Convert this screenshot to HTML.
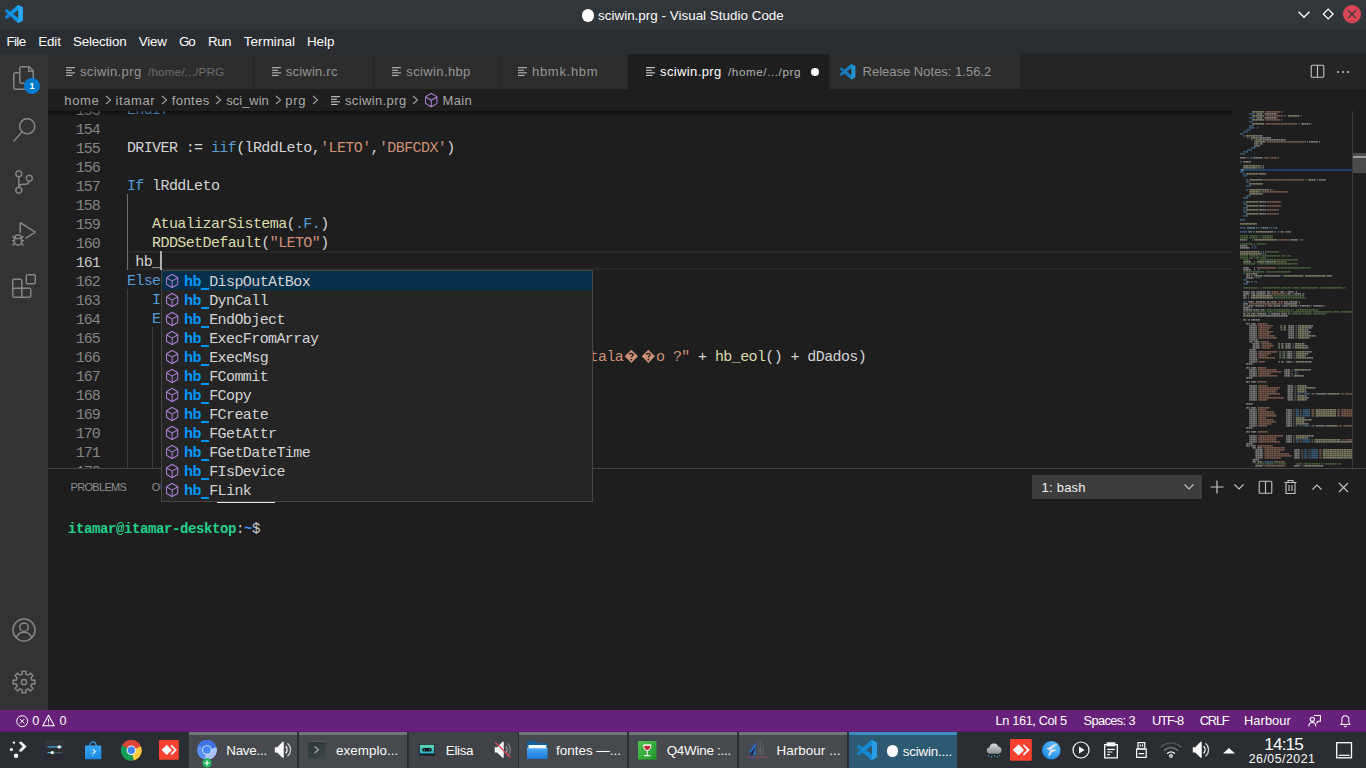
<!DOCTYPE html>
<html><head><meta charset="utf-8"><title>sciwin.prg - Visual Studio Code</title>
<style>
html,body{margin:0;padding:0;background:#1e1e1e;overflow:hidden;}
body{width:1366px;height:768px;position:relative;font-family:"Liberation Sans",sans-serif;}
#root{position:absolute;left:0;top:0;width:1366px;height:768px;overflow:hidden;background:#1e1e1e;}
.m{font-family:"Liberation Mono",monospace;}
svg{position:absolute;overflow:visible;}
</style></head><body><div id="root">
<div style="position:absolute;left:0px;top:0px;width:1366px;height:29px;background:#31363b;"></div>
<div style="position:absolute;left:0px;top:29px;width:1366px;height:25px;background:#2a2e32;"></div>
<div style="position:absolute;left:0px;top:54px;width:48px;height:656px;background:#333333;"></div>
<div style="position:absolute;left:48px;top:54px;width:1318px;height:35px;background:#252526;"></div>
<div style="position:absolute;left:48px;top:89px;width:1318px;height:22px;background:#1e1e1e;"></div>
<div style="position:absolute;left:48px;top:111px;width:1318px;height:357px;background:#1e1e1e;"></div>
<div style="position:absolute;left:48px;top:468px;width:1318px;height:242px;background:#1e1e1e;"></div>
<div style="position:absolute;left:0px;top:710px;width:1366px;height:22px;background:#68217a;"></div>
<div style="position:absolute;left:0px;top:731px;width:1366px;height:1px;background:#5c1d6c;"></div>
<div style="position:absolute;left:0px;top:732px;width:1366px;height:36px;background:#2a2e32;"></div>
<svg style="left:5.050000000000001px;top:4.950000000000001px;opacity:1" width="17.9" height="17.9" viewBox="0 0 24 24"><path d="M23.15 2.587L18.21.21a1.494 1.494 0 0 0-1.705.29l-9.46 8.63-4.12-3.128a.999.999 0 0 0-1.276.057L.327 7.261A1 1 0 0 0 .326 8.74L3.899 12 .326 15.26a1 1 0 0 0 .001 1.479L1.65 17.94a.999.999 0 0 0 1.276.057l4.12-3.128 9.46 8.63a1.492 1.492 0 0 0 1.704.29l4.942-2.377A1.5 1.5 0 0 0 24 20.06V3.939a1.5 1.5 0 0 0-.85-1.352zm-5.146 14.861L10.826 12l7.178-5.448v10.896z" fill="#1391e2"/><path d="M16.5 .5 L18.2 .2 L23.15 2.6 A1.5 1.5 0 0 1 24 3.94 V20.06 A1.5 1.5 0 0 1 23.15 21.4 L18.2 23.8 L16.5 23.5 L18 22 V2 Z" fill="#29a9f6"/><path d="M.33 7.26 L1.65 6.06 a1 1 0 0 1 1.28-.06 L7.05 9.13 L3.9 12 L.33 8.74 a1 1 0 0 1 0-1.48z M.33 15.26 L3.9 12 l3.15 2.87 L2.93 18 a1 1 0 0 1 -1.28-.06 L.33 16.74 a1 1 0 0 1 0-1.48z" fill="#0e84d2"/></svg>
<div style="position:absolute;left:582px;top:9.2px;width:12.4px;height:12.4px;border-radius:50%;background:#fcfcfc"></div>
<span style="position:absolute;left:598.00px;top:5.86px;line-height:19px;font-size:13.4px;color:#fcfcfc;white-space:pre;letter-spacing:0.023px;">sciwin.prg - Visual Studio Code</span>
<svg style="left:1296px;top:8px;" width="16" height="12" viewBox="0 0 16 12"><path d="M2.600 3.700 L8 9.200 L13.400 3.700" fill="none" stroke="#fcfcfc" stroke-width="1.300"/></svg>
<svg style="left:1320px;top:6px;" width="16" height="16" viewBox="0 0 16 16"><path d="M8.200 3.100 L13.100 8 L8.200 12.900 L3.300 8 Z" fill="none" stroke="#fcfcfc" stroke-width="1.300"/></svg>
<svg style="left:1342px;top:4px;" width="20" height="20" viewBox="0 0 20 20"><circle cx="10" cy="10.1" r="9.1" fill="#da4453"/><path d="M6 6.1 L14 14.1 M14 6.1 L6 14.1" stroke="#31363b" stroke-width="1.3" fill="none"/></svg>
<span style="position:absolute;left:6.50px;top:31.86px;line-height:19px;font-size:13.4px;color:#fcfcfc;white-space:pre;letter-spacing:-0.651px;">File</span>
<span style="position:absolute;left:38.30px;top:31.86px;line-height:19px;font-size:13.4px;color:#fcfcfc;white-space:pre;letter-spacing:-0.165px;">Edit</span>
<span style="position:absolute;left:73.00px;top:31.86px;line-height:19px;font-size:13.4px;color:#fcfcfc;white-space:pre;letter-spacing:-0.188px;">Selection</span>
<span style="position:absolute;left:138.80px;top:31.86px;line-height:19px;font-size:13.4px;color:#fcfcfc;white-space:pre;letter-spacing:-0.228px;">View</span>
<span style="position:absolute;left:179.00px;top:31.86px;line-height:19px;font-size:13.4px;color:#fcfcfc;white-space:pre;letter-spacing:-1.050px;">Go</span>
<span style="position:absolute;left:208.00px;top:31.86px;line-height:19px;font-size:13.4px;color:#fcfcfc;white-space:pre;letter-spacing:-0.511px;">Run</span>
<span style="position:absolute;left:243.80px;top:31.86px;line-height:19px;font-size:13.4px;color:#fcfcfc;white-space:pre;letter-spacing:0.079px;">Terminal</span>
<span style="position:absolute;left:307.00px;top:31.86px;line-height:19px;font-size:13.4px;color:#fcfcfc;white-space:pre;letter-spacing:-0.071px;">Help</span>
<svg style="left:12.0px;top:66.0px;" width="24" height="24" viewBox="0 0 24 24"><path d="M17.5 0h-9L7 1.5V6H2.5L1 7.5v15.07L2.5 24h12.07L16 22.57V18h4.7l1.3-1.43V4.5L17.5 0zm0 2.12l2.38 2.38H17.5V2.12zm-3 20.38h-12v-15H7v9.07L8.5 18h6v4.5zm6-6h-12v-15H16V6h4.5v10.5z" fill="#858585"/></svg>
<svg style="left:12.0px;top:118.0px;" width="24" height="24" viewBox="0 0 24 24"><path d="M15.25 0a8.25 8.25 0 0 0-6.18 13.72L1 22.88l1.12 1 8.05-9.12A8.251 8.251 0 1 0 15.25.01V0zm0 15a6.75 6.75 0 1 1 0-13.5 6.75 6.75 0 0 1 0 13.5z" fill="#858585"/></svg>
<svg style="left:12.0px;top:170.0px;" width="24" height="24" viewBox="0 0 24 24"><path d="M21.007 8.222A3.738 3.738 0 0 0 15.045 5.2a3.737 3.737 0 0 0 1.156 6.583 2.988 2.988 0 0 1-2.668 1.67h-2.99a4.456 4.456 0 0 0-2.989 1.165V7.4a3.737 3.737 0 1 0-1.494 0v9.117a3.776 3.776 0 1 0 1.816.099 2.99 2.99 0 0 1 2.668-1.667h2.99a4.484 4.484 0 0 0 4.223-3.039 3.736 3.736 0 0 0 3.25-3.687zM4.565 3.738a2.242 2.242 0 1 1 4.484 0 2.242 2.242 0 0 1-4.484 0zm4.484 16.441a2.242 2.242 0 1 1-4.484 0 2.242 2.242 0 0 1 4.484 0zm8.221-9.715a2.242 2.242 0 1 1 0-4.485 2.242 2.242 0 0 1 0 4.485z" fill="#858585"/></svg>
<svg style="left:12.0px;top:222.0px;" width="24" height="24" viewBox="0 0 24 24"><path d="M10.94 13.5l-1.32 1.32a3.73 3.73 0 0 0-7.24 0L1.06 13.5 0 14.56l1.72 1.72-.22.22V18H0v1.5h1.5v.08c.077.489.214.966.41 1.42L0 22.94 1.06 24l1.65-1.65A4.308 4.308 0 0 0 6 24a4.31 4.31 0 0 0 3.29-1.65L10.94 24 12 22.94 10.09 21c.198-.464.336-.951.41-1.45v-.1H12V18h-1.5v-1.5l-.22-.22L12 14.56l-1.06-1.06zM6 13.5a2.25 2.25 0 0 1 2.25 2.25h-4.5A2.25 2.25 0 0 1 6 13.5zm3 6a3.33 3.33 0 0 1-3 3 3.33 3.33 0 0 1-3-3v-2.25h6v2.25zm14.76-9.9v1.26L13.5 17.37V15.6l8.5-5.37L9 2v9.46a5.07 5.07 0 0 0-1.5-.72V.63L8.64 0l15.12 9.6z" fill="#858585"/></svg>
<svg style="left:12.0px;top:274.0px;" width="24" height="24" viewBox="0 0 24 24"><path d="M13.5 1.5L15 0h7.5L24 1.5V9l-1.5 1.5H15L13.5 9V1.5zm1.5 0V9h7.5V1.5H15zM0 15V6l1.5-1.5H9L10.5 6v7.5H18l1.5 1.5v7.5L18 24H1.5L0 22.5V15zm9-1.5V6H1.500v7.500H9zM9 15H1.500v7.500H9V15zm1.500 7.500H18V15h-7.500v7.500z" fill="#858585"/></svg>
<div style="position:absolute;left:24px;top:78px;width:16px;height:16px;border-radius:50%;background:#007acc;color:#fff;font-size:9px;font-weight:700;line-height:16px;text-align:center;">1</div>
<svg style="left:12px;top:618px;" width="24" height="24" viewBox="0 0 24 24"><g fill="none" stroke="#858585" stroke-width="1.5"><circle cx="12" cy="12" r="11"/><circle cx="12" cy="9.3" r="4.2"/><path d="M4.6 19.8 C5.6 15.8 8.4 14.2 12 14.2 C15.6 14.2 18.4 15.800 19.400 19.800"/></g></svg>
<svg style="left:12px;top:670px;" width="24" height="24" viewBox="0 0 24 24"><g fill="none" stroke="#858585" stroke-width="1.5" stroke-linejoin="round"><path d="M10.11 1.16 L13.89 1.16 L13.87 4.22 L16.18 5.18 L18.33 3.00 L21.00 5.67 L18.82 7.82 L19.78 10.13 L22.84 10.11 L22.84 13.89 L19.78 13.87 L18.82 16.18 L21.00 18.33 L18.33 21.00 L16.18 18.82 L13.87 19.78 L13.89 22.84 L10.11 22.84 L10.13 19.78 L7.82 18.82 L5.67 21.00 L3.00 18.33 L5.18 16.18 L4.22 13.87 L1.16 13.89 L1.16 10.11 L4.22 10.13 L5.18 7.82 L3.00 5.67 L5.67 3.00 L7.82 5.18 L10.13 4.22Z"/><circle cx="12" cy="12" r="2.6"/></g></svg>
<div style="position:absolute;left:48px;top:54px;width:206px;height:35px;background:#2d2d2d;"></div>
<div style="position:absolute;left:253px;top:54px;width:1px;height:35px;background:#252526;"></div>
<div style="position:absolute;left:254px;top:54px;width:120px;height:35px;background:#2d2d2d;"></div>
<div style="position:absolute;left:373px;top:54px;width:1px;height:35px;background:#252526;"></div>
<div style="position:absolute;left:374px;top:54px;width:126px;height:35px;background:#2d2d2d;"></div>
<div style="position:absolute;left:499px;top:54px;width:1px;height:35px;background:#252526;"></div>
<div style="position:absolute;left:500px;top:54px;width:128px;height:35px;background:#2d2d2d;"></div>
<div style="position:absolute;left:627px;top:54px;width:1px;height:35px;background:#252526;"></div>
<div style="position:absolute;left:628px;top:54px;width:202px;height:35px;background:#1e1e1e;"></div>
<div style="position:absolute;left:829px;top:54px;width:1px;height:35px;background:#252526;"></div>
<div style="position:absolute;left:830px;top:54px;width:191px;height:35px;background:#2d2d2d;"></div>
<div style="position:absolute;left:1020px;top:54px;width:1px;height:35px;background:#252526;"></div>
<svg style="left:65.5px;top:66.5px;" width="9" height="9.2" viewBox="0 0 9 9.2"><g fill="#b8b8b8"><rect x="0" y="0.100" width="9" height="1.100"/><rect x="0" y="2.700" width="6" height="1.100"/><rect x="0" y="5.300" width="9" height="1.100"/><rect x="0" y="7.900" width="6.500" height="1.100"/></g></svg>
<span style="position:absolute;left:80.00px;top:62.60px;line-height:18px;font-size:13px;color:#969696;white-space:pre;letter-spacing:0.369px;">sciwin.prg</span>
<span style="position:absolute;left:148.00px;top:64.05px;line-height:16px;font-size:11.7px;color:#6e6e6e;white-space:pre;letter-spacing:0.180px;">/home/.../PRG</span>
<svg style="left:271.5px;top:66.5px;" width="9" height="9.2" viewBox="0 0 9 9.2"><g fill="#b8b8b8"><rect x="0" y="0.100" width="9" height="1.100"/><rect x="0" y="2.700" width="6" height="1.100"/><rect x="0" y="5.300" width="9" height="1.100"/><rect x="0" y="7.900" width="6.500" height="1.100"/></g></svg>
<span style="position:absolute;left:285.80px;top:62.60px;line-height:18px;font-size:13px;color:#969696;white-space:pre;letter-spacing:0.218px;">sciwin.rc</span>
<svg style="left:391.5px;top:66.5px;" width="9" height="9.2" viewBox="0 0 9 9.2"><g fill="#b8b8b8"><rect x="0" y="0.100" width="9" height="1.100"/><rect x="0" y="2.700" width="6" height="1.100"/><rect x="0" y="5.300" width="9" height="1.100"/><rect x="0" y="7.900" width="6.500" height="1.100"/></g></svg>
<span style="position:absolute;left:406.30px;top:62.60px;line-height:18px;font-size:13px;color:#969696;white-space:pre;letter-spacing:0.368px;">sciwin.hbp</span>
<svg style="left:517.5px;top:66.5px;" width="9" height="9.2" viewBox="0 0 9 9.2"><g fill="#b8b8b8"><rect x="0" y="0.100" width="9" height="1.100"/><rect x="0" y="2.700" width="6" height="1.100"/><rect x="0" y="5.300" width="9" height="1.100"/><rect x="0" y="7.900" width="6.500" height="1.100"/></g></svg>
<span style="position:absolute;left:532.00px;top:62.60px;line-height:18px;font-size:13px;color:#969696;white-space:pre;letter-spacing:0.706px;">hbmk.hbm</span>
<svg style="left:645.5px;top:66.5px;" width="9" height="9.2" viewBox="0 0 9 9.2"><g fill="#d0d0d0"><rect x="0" y="0.100" width="9" height="1.100"/><rect x="0" y="2.700" width="6" height="1.100"/><rect x="0" y="5.300" width="9" height="1.100"/><rect x="0" y="7.900" width="6.500" height="1.100"/></g></svg>
<span style="position:absolute;left:660.00px;top:62.60px;line-height:18px;font-size:13px;color:#ffffff;white-space:pre;letter-spacing:0.379px;">sciwin.prg</span>
<span style="position:absolute;left:728.00px;top:64.05px;line-height:16px;font-size:11.7px;color:#b4b4b4;white-space:pre;letter-spacing:0.566px;">/home/.../prg</span>
<div style="position:absolute;left:811px;top:68px;width:8px;height:8px;border-radius:50%;background:#ffffff"></div>
<svg style="left:840.35px;top:64.05px;opacity:0.8" width="15.3" height="15.3" viewBox="0 0 24 24"><path d="M23.15 2.587L18.21.21a1.494 1.494 0 0 0-1.705.29l-9.46 8.63-4.12-3.128a.999.999 0 0 0-1.276.057L.327 7.261A1 1 0 0 0 .326 8.74L3.899 12 .326 15.26a1 1 0 0 0 .001 1.479L1.65 17.94a.999.999 0 0 0 1.276.057l4.12-3.128 9.46 8.63a1.492 1.492 0 0 0 1.704.29l4.942-2.377A1.5 1.5 0 0 0 24 20.06V3.939a1.5 1.5 0 0 0-.85-1.352zm-5.146 14.861L10.826 12l7.178-5.448v10.896z" fill="#1391e2"/><path d="M16.5 .5 L18.2 .2 L23.15 2.6 A1.5 1.5 0 0 1 24 3.94 V20.06 A1.5 1.5 0 0 1 23.15 21.4 L18.2 23.8 L16.5 23.5 L18 22 V2 Z" fill="#29a9f6"/><path d="M.33 7.26 L1.65 6.06 a1 1 0 0 1 1.28-.06 L7.05 9.13 L3.9 12 L.33 8.74 a1 1 0 0 1 0-1.48z M.33 15.26 L3.9 12 l3.15 2.87 L2.93 18 a1 1 0 0 1 -1.28-.06 L.33 16.74 a1 1 0 0 1 0-1.48z" fill="#0e84d2"/></svg>
<span style="position:absolute;left:862.50px;top:62.60px;line-height:18px;font-size:13px;color:#969696;white-space:pre;letter-spacing:0.008px;">Release Notes: 1.56.2</span>
<svg style="left:1310px;top:64px;" width="15" height="15" viewBox="0 0 15 15"><g fill="none" stroke="#c5c5c5" stroke-width="1.1"><rect x="1.2" y="1.3" width="12.6" height="12" rx="1"/><path d="M7.5 1.300V13.300"/></g></svg>
<div style="position:absolute;left:1337.1px;top:70.9px;width:1.9px;height:1.9px;border-radius:50%;background:#c5c5c5"></div>
<div style="position:absolute;left:1342.1px;top:70.9px;width:1.9px;height:1.9px;border-radius:50%;background:#c5c5c5"></div>
<div style="position:absolute;left:1347.1px;top:70.9px;width:1.9px;height:1.9px;border-radius:50%;background:#c5c5c5"></div>
<span style="position:absolute;left:64.30px;top:91.50px;line-height:18px;font-size:13px;color:#a9a9a9;white-space:pre;letter-spacing:0.620px;">home</span>
<svg style="left:104.7px;top:95px;" width="7" height="10" viewBox="0 0 7 10"><path d="M1 1 L5.6 5 L1 9" fill="none" stroke="#a0a0a0" stroke-width="1.1"/></svg>
<span style="position:absolute;left:115.50px;top:91.50px;line-height:18px;font-size:13px;color:#a9a9a9;white-space:pre;letter-spacing:0.614px;">itamar</span>
<svg style="left:160.7px;top:95px;" width="7" height="10" viewBox="0 0 7 10"><path d="M1 1 L5.6 5 L1 9" fill="none" stroke="#a0a0a0" stroke-width="1.1"/></svg>
<span style="position:absolute;left:171.80px;top:91.50px;line-height:18px;font-size:13px;color:#a9a9a9;white-space:pre;letter-spacing:0.414px;">fontes</span>
<svg style="left:215.2px;top:95px;" width="7" height="10" viewBox="0 0 7 10"><path d="M1 1 L5.6 5 L1 9" fill="none" stroke="#a0a0a0" stroke-width="1.1"/></svg>
<span style="position:absolute;left:226.30px;top:91.50px;line-height:18px;font-size:13px;color:#a9a9a9;white-space:pre;letter-spacing:-0.019px;">sci_win</span>
<svg style="left:274.7px;top:95px;" width="7" height="10" viewBox="0 0 7 10"><path d="M1 1 L5.6 5 L1 9" fill="none" stroke="#a0a0a0" stroke-width="1.1"/></svg>
<span style="position:absolute;left:285.30px;top:91.50px;line-height:18px;font-size:13px;color:#a9a9a9;white-space:pre;letter-spacing:0.681px;">prg</span>
<svg style="left:311.7px;top:95px;" width="7" height="10" viewBox="0 0 7 10"><path d="M1 1 L5.6 5 L1 9" fill="none" stroke="#a0a0a0" stroke-width="1.1"/></svg>
<svg style="left:330.5px;top:95.5px;" width="9" height="9.2" viewBox="0 0 9 9.2"><g fill="#c5c5c5"><rect x="0" y="0.100" width="9" height="1.100"/><rect x="0" y="2.700" width="6" height="1.100"/><rect x="0" y="5.300" width="9" height="1.100"/><rect x="0" y="7.900" width="6.500" height="1.100"/></g></svg>
<span style="position:absolute;left:345.00px;top:91.50px;line-height:18px;font-size:13px;color:#a9a9a9;white-space:pre;letter-spacing:0.369px;">sciwin.prg</span>
<svg style="left:412.2px;top:95px;" width="7" height="10" viewBox="0 0 7 10"><path d="M1 1 L5.6 5 L1 9" fill="none" stroke="#a0a0a0" stroke-width="1.1"/></svg>
<svg style="left:422.75px;top:92.35px;" width="16.5" height="16.5" viewBox="0 0 16 16"><path d="M13.51 4l-5-3h-1l-5 3-.49.86v6l.49.85 5 3h1l5-3 .49-.85v-6L13.51 4zm-6 9.56l-4.5-2.7V5.7l4.5 2.45v5.41zM3.27 4.7l4.74-2.84 4.74 2.84-4.74 2.590L3.270 4.700zm9.740 6.160l-4.500 2.700V8.150l4.500-2.450v5.160z" fill="#b180d7"/></svg>
<span style="position:absolute;left:442.50px;top:91.50px;line-height:18px;font-size:13px;color:#a9a9a9;white-space:pre;letter-spacing:0.318px;">Main</span>
<div style="position:absolute;left:48px;top:111px;width:1318px;height:357px;overflow:hidden;">
<div style="position:absolute;left:79px;top:140px;width:1105px;height:19px;box-sizing:border-box;border:2px solid #282828;border-right:none;"></div>
<div style="position:absolute;left:79px;top:83px;width:1px;height:76px;background:#707070;"></div>
<div style="position:absolute;left:79px;top:178px;width:1px;height:38px;background:#404040;"></div>
<div style="position:absolute;left:79px;top:216px;width:1px;height:152px;background:#404040;"></div>
<div style="position:absolute;left:104px;top:216px;width:1px;height:152px;background:#404040;"></div>
<div class="m" style="position:absolute;left:9.85px;top:-9.30px;width:42px;text-align:right;height:19px;line-height:19px;font-size:15px;letter-spacing:-0.950px;color:#858585">153</div>
<div class="m" style="position:absolute;left:9.85px;top:9.70px;width:42px;text-align:right;height:19px;line-height:19px;font-size:15px;letter-spacing:-0.950px;color:#858585">154</div>
<div class="m" style="position:absolute;left:9.85px;top:28.70px;width:42px;text-align:right;height:19px;line-height:19px;font-size:15px;letter-spacing:-0.950px;color:#858585">155</div>
<div class="m" style="position:absolute;left:9.85px;top:47.70px;width:42px;text-align:right;height:19px;line-height:19px;font-size:15px;letter-spacing:-0.950px;color:#858585">156</div>
<div class="m" style="position:absolute;left:9.85px;top:66.70px;width:42px;text-align:right;height:19px;line-height:19px;font-size:15px;letter-spacing:-0.950px;color:#858585">157</div>
<div class="m" style="position:absolute;left:9.85px;top:85.70px;width:42px;text-align:right;height:19px;line-height:19px;font-size:15px;letter-spacing:-0.950px;color:#858585">158</div>
<div class="m" style="position:absolute;left:9.85px;top:104.70px;width:42px;text-align:right;height:19px;line-height:19px;font-size:15px;letter-spacing:-0.950px;color:#858585">159</div>
<div class="m" style="position:absolute;left:9.85px;top:123.70px;width:42px;text-align:right;height:19px;line-height:19px;font-size:15px;letter-spacing:-0.950px;color:#858585">160</div>
<div class="m" style="position:absolute;left:9.85px;top:142.70px;width:42px;text-align:right;height:19px;line-height:19px;font-size:15px;letter-spacing:-0.950px;color:#c6c6c6">161</div>
<div class="m" style="position:absolute;left:9.85px;top:161.70px;width:42px;text-align:right;height:19px;line-height:19px;font-size:15px;letter-spacing:-0.950px;color:#858585">162</div>
<div class="m" style="position:absolute;left:9.85px;top:180.70px;width:42px;text-align:right;height:19px;line-height:19px;font-size:15px;letter-spacing:-0.950px;color:#858585">163</div>
<div class="m" style="position:absolute;left:9.85px;top:199.70px;width:42px;text-align:right;height:19px;line-height:19px;font-size:15px;letter-spacing:-0.950px;color:#858585">164</div>
<div class="m" style="position:absolute;left:9.85px;top:218.70px;width:42px;text-align:right;height:19px;line-height:19px;font-size:15px;letter-spacing:-0.950px;color:#858585">165</div>
<div class="m" style="position:absolute;left:9.85px;top:237.70px;width:42px;text-align:right;height:19px;line-height:19px;font-size:15px;letter-spacing:-0.950px;color:#858585">166</div>
<div class="m" style="position:absolute;left:9.85px;top:256.70px;width:42px;text-align:right;height:19px;line-height:19px;font-size:15px;letter-spacing:-0.950px;color:#858585">167</div>
<div class="m" style="position:absolute;left:9.85px;top:275.70px;width:42px;text-align:right;height:19px;line-height:19px;font-size:15px;letter-spacing:-0.950px;color:#858585">168</div>
<div class="m" style="position:absolute;left:9.85px;top:294.70px;width:42px;text-align:right;height:19px;line-height:19px;font-size:15px;letter-spacing:-0.950px;color:#858585">169</div>
<div class="m" style="position:absolute;left:9.85px;top:313.70px;width:42px;text-align:right;height:19px;line-height:19px;font-size:15px;letter-spacing:-0.950px;color:#858585">170</div>
<div class="m" style="position:absolute;left:9.85px;top:332.70px;width:42px;text-align:right;height:19px;line-height:19px;font-size:15px;letter-spacing:-0.950px;color:#858585">171</div>
<div class="m" style="position:absolute;left:9.85px;top:351.70px;width:42px;text-align:right;height:19px;line-height:19px;font-size:15px;letter-spacing:-0.950px;color:#858585">172</div>
<div class="m" style="position:absolute;left:78.90px;top:-10.20px;height:19px;line-height:19px;font-size:15px;letter-spacing:-0.600px;white-space:pre;color:#d4d4d4"><span style="color:#569cd6">EndIf</span></div>
<div class="m" style="position:absolute;left:78.90px;top:27.80px;height:19px;line-height:19px;font-size:15px;letter-spacing:-0.600px;white-space:pre;color:#d4d4d4"><span style="color:#d4d4d4">DRIVER := </span><span style="color:#569cd6">iif</span><span style="color:#d4d4d4">(lRddLeto,</span><span style="color:#ce9178">&#x27;LETO&#x27;</span><span style="color:#d4d4d4">,</span><span style="color:#ce9178">&#x27;DBFCDX&#x27;</span><span style="color:#d4d4d4">)</span></div>
<div class="m" style="position:absolute;left:78.90px;top:65.80px;height:19px;line-height:19px;font-size:15px;letter-spacing:-0.600px;white-space:pre;color:#d4d4d4"><span style="color:#569cd6">If</span><span style="color:#d4d4d4"> lRddLeto</span></div>
<div class="m" style="position:absolute;left:78.90px;top:103.80px;height:19px;line-height:19px;font-size:15px;letter-spacing:-0.600px;white-space:pre;color:#d4d4d4"><span style="color:#d4d4d4">   </span><span style="color:#dcdcaa">AtualizarSistema</span><span style="color:#d4d4d4">(</span><span style="color:#569cd6">.F.</span><span style="color:#d4d4d4">)</span></div>
<div class="m" style="position:absolute;left:78.90px;top:122.80px;height:19px;line-height:19px;font-size:15px;letter-spacing:-0.600px;white-space:pre;color:#d4d4d4"><span style="color:#d4d4d4">   </span><span style="color:#dcdcaa">RDDSetDefault</span><span style="color:#d4d4d4">(</span><span style="color:#ce9178">&quot;LETO&quot;</span><span style="color:#d4d4d4">)</span></div>
<div class="m" style="position:absolute;left:78.90px;top:141.80px;height:19px;line-height:19px;font-size:15px;letter-spacing:-0.600px;white-space:pre;color:#d4d4d4"><span style="color:#d4d4d4"> hb_</span></div>
<div class="m" style="position:absolute;left:78.90px;top:160.80px;height:19px;line-height:19px;font-size:15px;letter-spacing:-0.600px;white-space:pre;color:#d4d4d4"><span style="color:#569cd6">Else</span></div>
<div class="m" style="position:absolute;left:78.90px;top:179.80px;height:19px;line-height:19px;font-size:15px;letter-spacing:-0.600px;white-space:pre;color:#d4d4d4"><span style="color:#569cd6">   If</span></div>
<div class="m" style="position:absolute;left:78.90px;top:198.80px;height:19px;line-height:19px;font-size:15px;letter-spacing:-0.600px;white-space:pre;color:#d4d4d4"><span style="color:#569cd6">   Else</span></div>
<div class="m" style="position:absolute;left:541.60px;top:236.80px;height:19px;line-height:19px;font-size:15px;letter-spacing:-0.600px;white-space:pre;color:#d4d4d4"><span style="color:#ce9178">tala</span></div>
<svg style="left:576.0px;top:238.05px" width="14.7" height="14.7" viewBox="0 0 16 16"><path d="M8 0.8 L15.2 8 L8 15.200 L0.8 8 Z" fill="#ce9178"/><path d="M6.1 6.2 C6.1 4.2 9.9 4.2 9.9 6.300 C9.900 7.600 8 7.700 8 9.300" stroke="#1e1e1e" stroke-width="1.500" fill="none"/><circle cx="8" cy="11.500" r="1" fill="#1e1e1e"/></svg>
<svg style="left:592.65px;top:238.05px" width="14.7" height="14.7" viewBox="0 0 16 16"><path d="M8 0.8 L15.2 8 L8 15.200 L0.8 8 Z" fill="#ce9178"/><path d="M6.1 6.2 C6.1 4.2 9.9 4.2 9.9 6.300 C9.900 7.600 8 7.700 8 9.300" stroke="#1e1e1e" stroke-width="1.500" fill="none"/><circle cx="8" cy="11.500" r="1" fill="#1e1e1e"/></svg>
<div class="m" style="position:absolute;left:608.10px;top:236.80px;height:19px;line-height:19px;font-size:15px;letter-spacing:-0.600px;white-space:pre;color:#d4d4d4"><span style="color:#ce9178">o ?&quot;</span><span style="color:#d4d4d4"> + </span><span style="color:#dcdcaa">hb_eol</span><span style="color:#d4d4d4">() + dDados)</span></div>
<div style="position:absolute;left:112px;top:140px;width:2px;height:19px;background:#aeafad;"></div>
<div style="position:absolute;left:0;top:0;width:1184px;height:6px;box-shadow:#000000 0 6px 6px -6px inset;"></div>
<div style="position:absolute;left:1192px;top:58px;width:112px;height:2px;background:#1f4368;"></div>
<svg style="left:1192px;top:0px;opacity:0.66" width="112" height="357" viewBox="0 0 112 357"><defs><pattern id="mmp" width="7" height="2" patternUnits="userSpaceOnUse"><rect width="7" height="2" fill="#fff"/><rect x="1.1" y="0" width="0.5" height="2" fill="#666"/><rect x="3.2" y="0" width="0.45" height="2" fill="#777"/><rect x="5.3" y="0" width="0.5" height="2" fill="#666"/></pattern><mask id="mmk"><rect width="112" height="357" fill="url(#mmp)"/></mask></defs><g mask="url(#mmk)"><path d="M12.0 0.35h12.0v1.25h-12.0zM12.0 4.35h12.0v1.25h-12.0zM47.8 4.35h12.0v1.25h-12.0zM12.0 8.35h12.0v1.25h-12.0zM12.0 12.35h12.0v1.25h-12.0zM6.2 24.35h7.5v1.25h-7.5zM10.6 26.35h7.1v1.25h-7.1zM14.6 28.35h8.0v1.25h-8.0zM14.2 30.35h11.1v1.25h-11.1zM3.1 54.35h16.8v1.25h-16.8zM3.1 56.35h13.3v1.25h-13.3zM6.2 62.35h12.0v1.25h-12.0zM9.3 68.35h12.4v1.25h-12.4zM68.2 68.35h7.5v1.25h-7.5zM9.3 72.35h12.4v1.25h-12.4zM9.3 78.35h12.4v1.25h-12.4zM9.3 80.35h11.1v1.25h-11.1zM9.3 82.35h12.4v1.25h-12.4zM6.2 90.35h12.0v1.25h-12.0zM6.2 94.35h12.0v1.25h-12.0zM6.2 98.35h12.0v1.25h-12.0zM6.2 102.35h12.0v1.25h-12.0zM0.0 112.35h15.1v1.25h-15.1zM15.9 120.35h6.2v1.25h-6.2zM14.2 128.35h23.5v1.25h-23.5zM0.0 140.35h19.9v1.25h-19.9zM0.0 142.35h21.7v1.25h-21.7zM16.8 150.35h7.5v1.25h-7.5zM6.2 162.35h4.4v1.25h-4.4zM14.2 164.35h8.4v1.25h-8.4zM43.4 164.35h19.9v1.25h-19.9zM65.1 164.35h20.4v1.25h-20.4zM11.1 184.35h21.3v1.25h-21.3zM11.1 186.35h22.1v1.25h-22.1zM59.1 190.35h0.9v1.25h-0.9zM59.1 192.35h0.9v1.25h-0.9zM49.2 194.35h8.0v1.25h-8.0zM84.4 194.35h0.9v1.25h-0.9zM11.2 196.35h0.9v1.25h-0.9zM3.1 204.35h14.2v1.25h-14.2zM58.0 214.35h8.9v1.25h-8.9zM58.0 216.35h8.9v1.25h-8.9zM58.0 218.35h7.1v1.25h-7.1zM58.0 220.35h8.9v1.25h-8.9zM58.0 222.35h8.0v1.25h-8.0zM58.0 224.35h13.3v1.25h-13.3zM58.0 226.35h8.0v1.25h-8.0zM54.9 232.35h6.6v1.25h-6.6zM54.9 234.35h8.4v1.25h-8.4zM54.9 236.35h10.2v1.25h-10.2zM56.2 240.35h9.7v1.25h-9.7zM56.2 242.35h8.9v1.25h-8.9zM56.2 244.35h6.2v1.25h-6.2zM56.2 246.35h10.6v1.25h-10.6zM55.8 250.35h9.3v1.25h-9.3zM54.0 258.35h13.7v1.25h-13.7zM54.0 264.35h7.1v1.25h-7.1zM57.1 274.35h7.1v1.25h-7.1zM57.1 276.35h15.1v1.25h-15.1zM57.1 278.35h7.1v1.25h-7.1zM57.1 280.35h7.1v1.25h-7.1zM87.2 282.35h12.4v1.25h-12.4zM57.1 284.35h7.1v1.25h-7.1zM57.1 286.35h8.9v1.25h-8.9zM57.1 288.35h7.1v1.25h-7.1zM75.7 298.35h20.4v1.25h-20.4zM75.7 300.35h20.4v1.25h-20.4zM75.7 302.35h20.4v1.25h-20.4zM75.7 304.35h20.4v1.25h-20.4zM55.8 306.35h5.8v1.25h-5.8zM55.8 308.35h12.8v1.25h-12.8zM55.8 310.35h5.8v1.25h-5.8zM55.8 312.35h10.2v1.25h-10.2zM85.5 314.35h12.4v1.25h-12.4zM55.8 324.35h14.6v1.25h-14.6zM55.8 326.35h9.3v1.25h-9.3zM74.4 328.35h26.1v1.25h-26.1zM74.4 330.35h37.6v1.25h-37.6zM82.8 338.35h29.2v1.25h-29.2zM82.8 340.35h29.2v1.25h-29.2zM82.8 342.35h29.2v1.25h-29.2zM82.8 344.35h29.2v1.25h-29.2zM82.8 346.35h29.2v1.25h-29.2zM64.2 354.35h15.1v1.25h-15.1z" fill="#dcdcaa"/><path d="M25.2 0.35h15.5v1.25h-15.5zM25.2 4.35h17.7v1.25h-17.7zM25.2 8.35h14.6v1.25h-14.6zM25.2 12.35h31.9v1.25h-31.9zM26.6 30.35h39.4v1.25h-39.4zM23.9 46.35h4.4v1.25h-4.4zM30.6 46.35h6.6v1.25h-6.6zM17.3 56.35h5.3v1.25h-5.3zM22.1 68.35h42.5v1.25h-42.5zM21.3 80.35h26.6v1.25h-26.6zM26.6 90.35h13.3v1.25h-13.3zM26.6 94.35h13.3v1.25h-13.3zM26.6 98.35h11.1v1.25h-11.1zM26.6 102.35h11.1v1.25h-11.1zM39.0 128.35h10.2v1.25h-10.2zM36.8 150.35h8.4v1.25h-8.4zM16.8 156.35h19.0v1.25h-19.0zM31.4 180.35h7.5v1.25h-7.5zM31.4 182.35h14.2v1.25h-14.2zM38.1 190.35h4.9v1.25h-4.9zM9.3 192.35h31.0v1.25h-31.0zM17.3 212.35h10.2v1.25h-10.2zM18.2 214.35h14.6v1.25h-14.6zM18.2 216.35h12.4v1.25h-12.4zM18.2 218.35h10.2v1.25h-10.2zM18.2 220.35h14.6v1.25h-14.6zM18.2 222.35h11.5v1.25h-11.5zM18.2 224.35h16.4v1.25h-16.4zM18.2 226.35h18.6v1.25h-18.6zM20.4 230.35h8.4v1.25h-8.4zM21.3 232.35h10.6v1.25h-10.6zM21.3 234.35h12.4v1.25h-12.4zM21.3 236.35h9.3v1.25h-9.3zM18.2 240.35h19.5v1.25h-19.5zM18.2 242.35h12.4v1.25h-12.4zM18.2 244.35h9.3v1.25h-9.3zM18.2 246.35h16.8v1.25h-16.8zM18.2 250.35h6.6v1.25h-6.6zM17.3 256.35h9.3v1.25h-9.3zM18.2 258.35h18.6v1.25h-18.6zM18.2 260.35h23.5v1.25h-23.5zM18.2 262.35h12.4v1.25h-12.4zM18.2 264.35h19.5v1.25h-19.5zM17.3 270.35h9.3v1.25h-9.3zM18.2 274.35h9.3v1.25h-9.3zM18.2 276.35h21.7v1.25h-21.7zM18.2 278.35h19.5v1.25h-19.5zM18.2 280.35h17.7v1.25h-17.7zM18.2 282.35h21.7v1.25h-21.7zM71.7 282.35h3.1v1.25h-3.1zM101.0 282.35h2.7v1.25h-2.7zM105.0 282.35h7.1v1.25h-7.1zM18.2 284.35h10.6v1.25h-10.6zM18.2 286.35h25.7v1.25h-25.7zM18.2 288.35h9.3v1.25h-9.3zM17.3 296.35h12.4v1.25h-12.4zM18.2 298.35h8.0v1.25h-8.0zM71.3 298.35h3.1v1.25h-3.1zM97.4 298.35h2.7v1.25h-2.7zM101.0 298.35h11.1v1.25h-11.1zM18.2 300.35h15.9v1.25h-15.9zM71.3 300.35h3.1v1.25h-3.1zM97.4 300.35h2.7v1.25h-2.7zM101.0 300.35h11.1v1.25h-11.1zM18.2 302.35h16.8v1.25h-16.8zM71.3 302.35h3.1v1.25h-3.1zM97.4 302.35h2.7v1.25h-2.7zM101.0 302.35h11.1v1.25h-11.1zM18.2 304.35h18.6v1.25h-18.6zM71.3 304.35h3.1v1.25h-3.1zM97.4 304.35h2.7v1.25h-2.7zM101.0 304.35h11.1v1.25h-11.1zM18.2 306.35h8.0v1.25h-8.0zM18.2 308.35h15.5v1.25h-15.5zM18.2 310.35h17.7v1.25h-17.7zM18.2 312.35h13.3v1.25h-13.3zM18.2 314.35h8.9v1.25h-8.9zM71.3 314.35h3.1v1.25h-3.1zM99.2 314.35h2.7v1.25h-2.7zM103.2 314.35h8.9v1.25h-8.9zM17.3 320.35h10.6v1.25h-10.6zM18.2 324.35h24.8v1.25h-24.8zM18.2 326.35h18.6v1.25h-18.6zM18.2 328.35h17.7v1.25h-17.7zM71.3 328.35h1.8v1.25h-1.8zM101.9 328.35h2.7v1.25h-2.7zM105.8 328.35h6.2v1.25h-6.2zM18.2 330.35h21.7v1.25h-21.7zM71.3 330.35h1.8v1.25h-1.8zM17.3 334.35h15.5v1.25h-15.5zM23.5 336.35h21.3v1.25h-21.3zM24.4 338.35h20.4v1.25h-20.4zM79.3 338.35h2.2v1.25h-2.2zM24.4 340.35h15.9v1.25h-15.9zM79.3 340.35h2.2v1.25h-2.2zM24.4 342.35h24.8v1.25h-24.8zM79.3 342.35h2.2v1.25h-2.2zM24.4 344.35h27.5v1.25h-27.5zM79.3 344.35h2.2v1.25h-2.2zM24.4 346.35h16.8v1.25h-16.8zM79.3 346.35h2.2v1.25h-2.2zM23.5 350.35h0.9v1.25h-0.9zM33.7 350.35h11.1v1.25h-11.1zM24.4 354.35h20.8v1.25h-20.8z" fill="#ce9178"/><path d="M41.6 0.35h0.9v1.25h-0.9zM16.4 2.35h6.2v1.25h-6.2zM24.4 2.35h12.8v1.25h-12.8zM44.3 4.35h1.3v1.25h-1.3zM61.1 4.35h0.9v1.25h-0.9zM16.4 6.35h6.2v1.25h-6.2zM24.4 6.35h12.8v1.25h-12.8zM41.0 8.35h0.9v1.25h-0.9zM58.5 12.35h0.9v1.25h-0.9zM61.1 12.35h8.9v1.25h-8.9zM71.1 12.35h0.9v1.25h-0.9zM13.7 24.35h8.9v1.25h-8.9zM18.2 26.35h12.8v1.25h-12.8zM23.0 28.35h23.0v1.25h-23.0zM67.1 30.35h0.9v1.25h-0.9zM69.1 30.35h8.9v1.25h-8.9zM79.1 30.35h0.9v1.25h-0.9zM14.2 32.35h4.4v1.25h-4.4zM19.8 32.35h2.8v1.25h-2.8zM14.2 34.35h5.8v1.25h-5.8zM0.0 46.35h6.2v1.25h-6.2zM7.5 46.35h1.3v1.25h-1.3zM13.3 46.35h9.3v1.25h-9.3zM28.8 46.35h0.7v1.25h-0.7zM38.1 46.35h0.9v1.25h-0.9zM3.1 50.35h8.0v1.25h-8.0zM20.1 54.35h0.7v1.25h-0.7zM23.0 54.35h0.9v1.25h-0.9zM16.6 56.35h0.7v1.25h-0.7zM23.0 56.35h0.9v1.25h-0.9zM1.1 58.35h2.9v1.25h-2.9zM18.6 62.35h7.5v1.25h-7.5zM66.0 68.35h0.9v1.25h-0.9zM76.8 68.35h0.9v1.25h-0.9zM78.8 68.35h7.1v1.25h-7.1zM21.9 72.35h1.2v1.25h-1.2zM22.1 78.35h6.6v1.25h-6.6zM30.1 78.35h1.3v1.25h-1.3zM21.9 82.35h1.2v1.25h-1.2zM18.6 90.35h7.5v1.25h-7.5zM40.3 90.35h0.9v1.25h-0.9zM18.6 94.35h7.5v1.25h-7.5zM40.3 94.35h0.9v1.25h-0.9zM18.6 98.35h7.5v1.25h-7.5zM38.1 98.35h0.9v1.25h-0.9zM18.6 102.35h7.5v1.25h-7.5zM38.1 102.35h0.9v1.25h-0.9zM15.1 112.35h1.8v1.25h-1.8zM15.9 116.35h1.1v1.25h-1.1zM19.8 116.35h0.7v1.25h-0.7zM29.2 116.35h1.1v1.25h-1.1zM33.0 116.35h0.7v1.25h-0.7zM13.3 120.35h1.3v1.25h-1.3zM22.1 120.35h11.1v1.25h-11.1zM34.5 120.35h1.3v1.25h-1.3zM40.1 120.35h0.7v1.25h-0.7zM0.0 128.35h7.1v1.25h-7.1zM12.0 128.35h0.9v1.25h-0.9zM50.0 128.35h8.0v1.25h-8.0zM61.1 128.35h1.8v1.25h-1.8zM0.0 134.35h7.1v1.25h-7.1zM12.0 134.35h0.9v1.25h-0.9zM0.0 136.35h9.7v1.25h-9.7zM12.0 136.35h0.9v1.25h-0.9zM23.0 140.35h0.9v1.25h-0.9zM24.9 142.35h0.9v1.25h-0.9zM3.1 150.35h8.0v1.25h-8.0zM14.2 150.35h0.9v1.25h-0.9zM24.8 150.35h11.5v1.25h-11.5zM45.4 150.35h0.9v1.25h-0.9zM3.1 156.35h5.8v1.25h-5.8zM14.2 156.35h0.9v1.25h-0.9zM3.1 158.35h8.0v1.25h-8.0zM14.2 158.35h0.9v1.25h-0.9zM11.1 162.35h6.6v1.25h-6.6zM6.2 164.35h3.5v1.25h-3.5zM11.1 164.35h0.9v1.25h-0.9zM23.5 164.35h16.4v1.25h-16.4zM86.4 164.35h5.3v1.25h-5.3zM6.2 166.35h7.5v1.25h-7.5zM15.7 166.35h0.9v1.25h-0.9zM6.2 170.35h3.5v1.25h-3.5zM11.3 170.35h1.1v1.25h-1.1zM3.1 180.35h6.6v1.25h-6.6zM11.1 180.35h4.0v1.25h-4.0zM16.4 180.35h9.3v1.25h-9.3zM27.0 180.35h3.5v1.25h-3.5zM40.3 180.35h4.0v1.25h-4.0zM46.1 180.35h1.1v1.25h-1.1zM48.3 180.35h5.3v1.25h-5.3zM3.1 182.35h6.6v1.25h-6.6zM11.1 182.35h4.0v1.25h-4.0zM16.4 182.35h9.3v1.25h-9.3zM27.0 182.35h3.5v1.25h-3.5zM46.9 182.35h4.0v1.25h-4.0zM52.5 182.35h0.9v1.25h-0.9zM54.5 182.35h6.6v1.25h-6.6zM3.1 184.35h3.5v1.25h-3.5zM8.0 184.35h1.1v1.25h-1.1zM3.1 186.35h3.5v1.25h-3.5zM8.0 186.35h1.1v1.25h-1.1zM8.0 190.35h5.8v1.25h-5.8zM15.9 190.35h9.7v1.25h-9.7zM27.0 190.35h2.7v1.25h-2.7zM30.6 190.35h6.2v1.25h-6.2zM43.8 190.35h4.4v1.25h-4.4zM49.2 190.35h8.9v1.25h-8.9zM3.1 192.35h4.9v1.25h-4.9zM41.2 192.35h0.9v1.25h-0.9zM43.8 192.35h13.3v1.25h-13.3zM3.1 194.35h1.8v1.25h-1.8zM8.0 194.35h5.8v1.25h-5.8zM15.1 194.35h9.3v1.25h-9.3zM27.9 194.35h4.4v1.25h-4.4zM33.2 194.35h7.5v1.25h-7.5zM42.1 194.35h6.2v1.25h-6.2zM57.8 194.35h0.9v1.25h-0.9zM60.2 194.35h9.7v1.25h-9.7zM71.1 194.35h0.9v1.25h-0.9zM73.1 194.35h10.2v1.25h-10.2zM3.1 196.35h6.6v1.25h-6.6zM3.1 198.35h9.3v1.25h-9.3zM13.3 198.35h6.2v1.25h-6.2zM20.8 198.35h4.0v1.25h-4.0zM3.1 202.35h2.7v1.25h-2.7zM7.1 202.35h2.7v1.25h-2.7zM11.1 202.35h4.4v1.25h-4.4zM16.8 202.35h9.7v1.25h-9.7zM31.0 202.35h8.9v1.25h-8.9zM41.2 202.35h5.8v1.25h-5.8zM48.3 202.35h1.3v1.25h-1.3zM17.7 204.35h30.1v1.25h-30.1zM3.1 208.35h3.5v1.25h-3.5zM8.0 208.35h1.8v1.25h-1.8zM11.1 208.35h8.9v1.25h-8.9zM6.2 212.35h3.5v1.25h-3.5zM11.1 212.35h4.9v1.25h-4.9zM9.3 214.35h7.5v1.25h-7.5zM48.3 214.35h5.8v1.25h-5.8zM66.9 214.35h6.2v1.25h-6.2zM9.3 216.35h7.5v1.25h-7.5zM48.3 216.35h5.8v1.25h-5.8zM66.9 216.35h4.9v1.25h-4.9zM9.3 218.35h7.5v1.25h-7.5zM48.3 218.35h5.8v1.25h-5.8zM65.1 218.35h3.5v1.25h-3.5zM9.3 220.35h7.5v1.25h-7.5zM48.3 220.35h5.8v1.25h-5.8zM66.9 220.35h4.0v1.25h-4.0zM9.3 222.35h7.5v1.25h-7.5zM48.3 222.35h5.8v1.25h-5.8zM66.0 222.35h3.5v1.25h-3.5zM9.3 224.35h7.5v1.25h-7.5zM48.3 224.35h5.8v1.25h-5.8zM71.3 224.35h4.4v1.25h-4.4zM9.3 226.35h7.5v1.25h-7.5zM48.3 226.35h5.8v1.25h-5.8zM66.0 226.35h3.5v1.25h-3.5zM9.3 228.35h8.4v1.25h-8.4zM9.3 230.35h3.5v1.25h-3.5zM14.2 230.35h4.9v1.25h-4.9zM12.4 232.35h7.5v1.25h-7.5zM45.2 232.35h5.8v1.25h-5.8zM61.6 232.35h3.1v1.25h-3.1zM12.4 234.35h7.5v1.25h-7.5zM45.2 234.35h5.8v1.25h-5.8zM63.3 234.35h4.4v1.25h-4.4zM12.4 236.35h7.5v1.25h-7.5zM45.2 236.35h5.8v1.25h-5.8zM65.1 236.35h3.5v1.25h-3.5zM9.3 238.35h6.6v1.25h-6.6zM9.3 240.35h7.5v1.25h-7.5zM46.5 240.35h5.8v1.25h-5.8zM66.0 240.35h5.8v1.25h-5.8zM9.3 242.35h7.5v1.25h-7.5zM46.5 242.35h5.8v1.25h-5.8zM65.1 242.35h3.5v1.25h-3.5zM9.3 244.35h7.5v1.25h-7.5zM46.5 244.35h5.8v1.25h-5.8zM62.4 244.35h3.5v1.25h-3.5zM9.3 246.35h7.5v1.25h-7.5zM46.5 246.35h5.8v1.25h-5.8zM66.9 246.35h6.2v1.25h-6.2zM9.3 248.35h8.4v1.25h-8.4zM9.3 250.35h7.5v1.25h-7.5zM46.1 250.35h5.8v1.25h-5.8zM65.1 250.35h6.6v1.25h-6.6zM6.2 252.35h6.6v1.25h-6.6zM6.2 256.35h3.5v1.25h-3.5zM11.1 256.35h4.9v1.25h-4.9zM9.3 258.35h7.5v1.25h-7.5zM44.3 258.35h5.8v1.25h-5.8zM67.8 258.35h3.1v1.25h-3.1zM9.3 260.35h7.5v1.25h-7.5zM44.3 260.35h5.8v1.25h-5.8zM56.8 260.35h0.7v1.25h-0.7zM9.3 262.35h7.5v1.25h-7.5zM44.3 262.35h5.8v1.25h-5.8zM56.8 262.35h0.7v1.25h-0.7zM9.3 264.35h7.5v1.25h-7.5zM44.3 264.35h5.8v1.25h-5.8zM61.1 264.35h2.7v1.25h-2.7zM6.2 266.35h6.6v1.25h-6.6zM6.2 270.35h3.5v1.25h-3.5zM11.1 270.35h4.9v1.25h-4.9zM9.3 274.35h7.5v1.25h-7.5zM47.4 274.35h5.8v1.25h-5.8zM64.2 274.35h2.7v1.25h-2.7zM9.3 276.35h7.5v1.25h-7.5zM47.4 276.35h5.8v1.25h-5.8zM72.2 276.35h3.5v1.25h-3.5zM9.3 278.35h7.5v1.25h-7.5zM47.4 278.35h5.8v1.25h-5.8zM64.2 278.35h1.8v1.25h-1.8zM9.3 280.35h7.5v1.25h-7.5zM47.4 280.35h5.8v1.25h-5.8zM64.2 280.35h2.7v1.25h-2.7zM9.3 282.35h7.5v1.25h-7.5zM47.4 282.35h5.3v1.25h-5.3zM76.2 282.35h10.2v1.25h-10.2zM9.3 284.35h7.5v1.25h-7.5zM47.4 284.35h5.8v1.25h-5.8zM64.2 284.35h2.7v1.25h-2.7zM9.3 286.35h7.5v1.25h-7.5zM47.4 286.35h5.8v1.25h-5.8zM66.0 286.35h3.1v1.25h-3.1zM9.3 288.35h7.5v1.25h-7.5zM47.4 288.35h5.8v1.25h-5.8zM64.2 288.35h2.7v1.25h-2.7zM6.2 292.35h6.6v1.25h-6.6zM6.2 296.35h3.5v1.25h-3.5zM11.1 296.35h4.9v1.25h-4.9zM9.3 298.35h7.5v1.25h-7.5zM46.1 298.35h5.8v1.25h-5.8zM9.3 300.35h7.5v1.25h-7.5zM46.1 300.35h5.8v1.25h-5.8zM9.3 302.35h7.5v1.25h-7.5zM46.1 302.35h5.8v1.25h-5.8zM9.3 304.35h7.5v1.25h-7.5zM46.1 304.35h5.8v1.25h-5.8zM9.3 306.35h7.5v1.25h-7.5zM46.1 306.35h5.8v1.25h-5.8zM61.6 306.35h3.1v1.25h-3.1zM9.3 308.35h7.5v1.25h-7.5zM46.1 308.35h5.8v1.25h-5.8zM68.6 308.35h3.1v1.25h-3.1zM9.3 310.35h7.5v1.25h-7.5zM46.1 310.35h5.8v1.25h-5.8zM61.6 310.35h3.1v1.25h-3.1zM9.3 312.35h7.5v1.25h-7.5zM46.1 312.35h5.8v1.25h-5.8zM66.0 312.35h2.7v1.25h-2.7zM9.3 314.35h7.5v1.25h-7.5zM46.1 314.35h5.8v1.25h-5.8zM75.7 314.35h8.9v1.25h-8.9zM6.2 316.35h6.6v1.25h-6.6zM6.2 320.35h3.5v1.25h-3.5zM11.1 320.35h4.9v1.25h-4.9zM9.3 324.35h7.5v1.25h-7.5zM46.1 324.35h5.8v1.25h-5.8zM70.4 324.35h3.5v1.25h-3.5zM9.3 326.35h7.5v1.25h-7.5zM46.1 326.35h5.8v1.25h-5.8zM65.1 326.35h3.1v1.25h-3.1zM9.3 328.35h7.5v1.25h-7.5zM46.1 328.35h5.8v1.25h-5.8zM9.3 330.35h7.5v1.25h-7.5zM46.1 330.35h5.8v1.25h-5.8zM6.2 332.35h6.6v1.25h-6.6zM6.2 334.35h3.5v1.25h-3.5zM11.1 334.35h4.9v1.25h-4.9zM12.4 336.35h3.5v1.25h-3.5zM17.3 336.35h4.9v1.25h-4.9zM15.1 338.35h8.0v1.25h-8.0zM54.0 338.35h5.8v1.25h-5.8zM15.1 340.35h8.0v1.25h-8.0zM54.0 340.35h5.8v1.25h-5.8zM15.1 342.35h8.0v1.25h-8.0zM54.0 342.35h5.8v1.25h-5.8zM15.1 344.35h8.0v1.25h-8.0zM54.0 344.35h5.8v1.25h-5.8zM15.1 346.35h8.0v1.25h-8.0zM54.0 346.35h5.8v1.25h-5.8zM12.4 348.35h6.6v1.25h-6.6zM12.4 350.35h3.5v1.25h-3.5zM17.3 350.35h4.9v1.25h-4.9zM15.1 354.35h8.0v1.25h-8.0zM54.0 354.35h5.8v1.25h-5.8zM79.3 354.35h4.0v1.25h-4.0z" fill="#d4d4d4"/><path d="M9.1 2.35h5.5v1.25h-5.5zM9.1 6.35h5.5v1.25h-5.5zM9.1 10.35h3.7v1.25h-3.7zM9.1 14.35h4.6v1.25h-4.6zM9.1 16.35h5.5v1.25h-5.5zM16.8 16.35h1.8v1.25h-1.8zM6.2 18.35h4.4v1.25h-4.4zM3.1 20.35h4.4v1.25h-4.4zM0.0 22.35h3.5v1.25h-3.5zM3.1 24.35h1.8v1.25h-1.8zM7.1 26.35h1.8v1.25h-1.8zM11.1 28.35h1.8v1.25h-1.8zM11.1 36.35h4.9v1.25h-4.9zM7.1 38.35h4.9v1.25h-4.9zM3.1 40.35h4.9v1.25h-4.9zM0.0 42.35h4.9v1.25h-4.9zM10.2 46.35h2.7v1.25h-2.7zM0.0 50.35h1.8v1.25h-1.8zM21.3 54.35h1.3v1.25h-1.3zM0.0 60.35h3.5v1.25h-3.5zM3.1 62.35h1.8v1.25h-1.8zM3.1 64.35h4.0v1.25h-4.0zM6.2 68.35h1.8v1.25h-1.8zM6.2 70.35h3.5v1.25h-3.5zM6.2 74.35h4.9v1.25h-4.9zM6.2 78.35h1.8v1.25h-1.8zM6.2 84.35h4.9v1.25h-4.9zM3.1 86.35h4.9v1.25h-4.9zM3.1 90.35h1.8v1.25h-1.8zM3.1 92.35h4.0v1.25h-4.0zM3.1 96.35h4.9v1.25h-4.9zM3.1 98.35h1.8v1.25h-1.8zM3.1 100.35h4.0v1.25h-4.0zM3.1 104.35h4.9v1.25h-4.9zM0.0 108.35h4.9v1.25h-4.9zM0.0 116.35h5.8v1.25h-5.8zM17.7 116.35h1.5v1.25h-1.5zM31.0 116.35h1.5v1.25h-1.5zM0.0 120.35h7.1v1.25h-7.1zM37.6 120.35h1.8v1.25h-1.8zM58.9 128.35h1.1v1.25h-1.1zM14.6 134.35h1.9v1.25h-1.9zM14.6 136.35h1.9v1.25h-1.9zM20.8 140.35h1.5v1.25h-1.5zM22.9 142.35h1.3v1.25h-1.3zM17.7 158.35h1.8v1.25h-1.8zM3.1 162.35h1.8v1.25h-1.8zM40.7 164.35h1.5v1.25h-1.5zM18.2 166.35h2.2v1.25h-2.2zM3.1 168.35h4.0v1.25h-4.0zM14.2 170.35h2.7v1.25h-2.7zM3.1 172.35h4.9v1.25h-4.9zM3.1 190.35h3.5v1.25h-3.5zM27.9 202.35h2.2v1.25h-2.2zM54.9 260.35h1.3v1.25h-1.3zM54.9 262.35h1.3v1.25h-1.3zM57.1 282.35h2.7v1.25h-2.7zM64.2 282.35h6.2v1.25h-6.2zM55.8 298.35h3.1v1.25h-3.1zM62.9 298.35h7.1v1.25h-7.1zM55.8 300.35h3.1v1.25h-3.1zM62.9 300.35h7.1v1.25h-7.1zM55.8 302.35h3.1v1.25h-3.1zM62.9 302.35h7.1v1.25h-7.1zM55.8 304.35h3.1v1.25h-3.1zM62.9 304.35h7.1v1.25h-7.1zM55.8 314.35h2.2v1.25h-2.2zM63.3 314.35h6.6v1.25h-6.6zM55.8 328.35h3.1v1.25h-3.1zM62.9 328.35h7.1v1.25h-7.1zM55.8 330.35h3.1v1.25h-3.1zM62.9 330.35h7.1v1.25h-7.1zM64.2 338.35h2.7v1.25h-2.7zM70.4 338.35h7.5v1.25h-7.5zM64.2 340.35h2.7v1.25h-2.7zM70.4 340.35h7.5v1.25h-7.5zM64.2 342.35h2.7v1.25h-2.7zM70.4 342.35h7.5v1.25h-7.5zM64.2 344.35h2.7v1.25h-2.7zM70.4 344.35h7.5v1.25h-7.5zM64.2 346.35h2.7v1.25h-2.7zM70.4 346.35h7.5v1.25h-7.5zM24.8 350.35h8.0v1.25h-8.0z" fill="#569cd6"/><path d="M33.0 78.35h1.1v1.25h-1.1zM41.2 120.35h2.7v1.25h-2.7zM45.2 120.35h5.8v1.25h-5.8zM55.8 180.35h1.3v1.25h-1.3zM62.4 182.35h2.2v1.25h-2.2zM6.0 194.35h1.1v1.25h-1.1zM25.2 194.35h1.3v1.25h-1.3zM40.3 214.35h1.8v1.25h-1.8zM43.4 214.35h2.7v1.25h-2.7zM40.3 216.35h1.8v1.25h-1.8zM43.4 216.35h2.7v1.25h-2.7zM40.3 218.35h1.8v1.25h-1.8zM43.4 218.35h2.7v1.25h-2.7zM38.1 232.35h1.8v1.25h-1.8zM41.2 232.35h2.7v1.25h-2.7zM38.1 234.35h1.8v1.25h-1.8zM41.2 234.35h2.7v1.25h-2.7zM38.1 236.35h1.8v1.25h-1.8zM41.2 236.35h2.7v1.25h-2.7zM39.4 240.35h1.8v1.25h-1.8zM42.5 240.35h2.7v1.25h-2.7zM39.4 242.35h1.8v1.25h-1.8zM42.5 242.35h2.7v1.25h-2.7zM39.4 244.35h1.8v1.25h-1.8zM42.5 244.35h2.7v1.25h-2.7zM39.4 246.35h1.8v1.25h-1.8zM42.5 246.35h2.7v1.25h-2.7zM38.1 250.35h1.8v1.25h-1.8zM41.2 250.35h2.7v1.25h-2.7z" fill="#b5cea8"/><path d="M7.1 116.35h8.0v1.25h-8.0zM21.7 116.35h6.6v1.25h-6.6zM35.0 116.35h2.2v1.25h-2.2zM8.0 120.35h4.0v1.25h-4.0z" fill="#9cdcfe"/><path d="M0.0 124.35h8.0v1.25h-8.0zM9.3 124.35h8.4v1.25h-8.4zM19.0 124.35h1.3v1.25h-1.3zM21.7 124.35h11.1v1.25h-11.1zM0.0 126.35h8.0v1.25h-8.0zM9.3 126.35h8.4v1.25h-8.4zM19.0 126.35h1.3v1.25h-1.3zM21.7 126.35h11.1v1.25h-11.1zM0.0 132.35h12.4v1.25h-12.4zM13.7 132.35h1.1v1.25h-1.1zM16.8 132.35h8.9v1.25h-8.9zM25.2 140.35h13.7v1.25h-13.7zM0.0 144.35h8.0v1.25h-8.0zM9.3 144.35h9.3v1.25h-9.3zM19.5 144.35h1.1v1.25h-1.1zM21.7 144.35h18.6v1.25h-18.6zM41.6 144.35h4.0v1.25h-4.0zM46.9 144.35h4.0v1.25h-4.0zM0.0 146.35h8.0v1.25h-8.0zM9.3 146.35h4.4v1.25h-4.4zM15.1 146.35h4.4v1.25h-4.4zM20.8 146.35h5.3v1.25h-5.3zM3.1 148.35h6.6v1.25h-6.6zM17.3 148.35h0.9v1.25h-0.9zM19.0 148.35h39.0v1.25h-39.0zM3.1 152.35h12.0v1.25h-12.0zM17.3 152.35h0.9v1.25h-0.9zM19.0 152.35h39.0v1.25h-39.0zM37.6 156.35h33.2v1.25h-33.2zM3.1 160.35h20.8v1.25h-20.8zM25.7 160.35h24.8v1.25h-24.8zM3.1 176.35h14.6v1.25h-14.6zM19.3 176.35h1.2v1.25h-1.2zM22.1 176.35h18.2v1.25h-18.2zM41.2 176.35h9.7v1.25h-9.7zM52.3 176.35h7.5v1.25h-7.5zM61.1 176.35h17.3v1.25h-17.3zM79.7 176.35h23.5v1.25h-23.5zM104.5 176.35h1.3v1.25h-1.3zM33.2 184.35h31.0v1.25h-31.0zM34.1 186.35h31.9v1.25h-31.9zM26.1 198.35h23.5v1.25h-23.5zM50.9 198.35h2.7v1.25h-2.7zM56.2 198.35h22.6v1.25h-22.6zM3.1 200.35h9.7v1.25h-9.7zM13.7 200.35h12.4v1.25h-12.4zM27.5 200.35h4.9v1.25h-4.9zM33.2 200.35h2.2v1.25h-2.2zM36.3 200.35h15.5v1.25h-15.5zM53.1 200.35h18.6v1.25h-18.6zM73.1 200.35h19.0v1.25h-19.0zM93.4 200.35h6.6v1.25h-6.6zM101.0 200.35h11.1v1.25h-11.1zM51.4 202.35h10.6v1.25h-10.6zM62.9 202.35h8.9v1.25h-8.9zM73.1 202.35h12.8v1.25h-12.8zM15.1 352.35h10.2v1.25h-10.2zM26.1 352.35h8.0v1.25h-8.0zM35.4 352.35h2.2v1.25h-2.2zM38.5 352.35h8.0v1.25h-8.0zM56.2 352.35h5.8v1.25h-5.8zM63.3 352.35h7.1v1.25h-7.1zM71.3 352.35h8.9v1.25h-8.9zM81.5 352.35h1.8v1.25h-1.8zM84.6 352.35h12.4v1.25h-12.4zM98.3 352.35h2.7v1.25h-2.7z" fill="#6a9955"/><path d="M55.4 214.35h1.8v1.25h-1.8zM55.4 216.35h1.8v1.25h-1.8zM55.4 218.35h1.8v1.25h-1.8zM55.4 220.35h1.8v1.25h-1.8zM55.4 222.35h1.8v1.25h-1.8zM55.4 224.35h1.8v1.25h-1.8zM55.4 226.35h1.8v1.25h-1.8zM52.3 232.35h1.8v1.25h-1.8zM52.3 234.35h1.8v1.25h-1.8zM52.3 236.35h1.8v1.25h-1.8zM53.6 240.35h1.8v1.25h-1.8zM53.6 242.35h1.8v1.25h-1.8zM53.6 244.35h1.8v1.25h-1.8zM53.6 246.35h1.8v1.25h-1.8zM53.1 250.35h1.8v1.25h-1.8zM51.4 258.35h1.8v1.25h-1.8zM51.4 260.35h1.8v1.25h-1.8zM51.4 262.35h1.8v1.25h-1.8zM51.4 264.35h1.8v1.25h-1.8zM54.5 274.35h1.8v1.25h-1.8zM54.5 276.35h1.8v1.25h-1.8zM54.5 278.35h1.8v1.25h-1.8zM54.5 280.35h1.8v1.25h-1.8zM54.0 282.35h2.2v1.25h-2.2zM60.7 282.35h1.8v1.25h-1.8zM54.5 284.35h1.8v1.25h-1.8zM54.5 286.35h1.8v1.25h-1.8zM54.5 288.35h1.8v1.25h-1.8zM53.1 298.35h1.8v1.25h-1.8zM59.8 298.35h2.2v1.25h-2.2zM53.1 300.35h1.8v1.25h-1.8zM59.8 300.35h2.2v1.25h-2.2zM53.1 302.35h1.8v1.25h-1.8zM59.8 302.35h2.2v1.25h-2.2zM53.1 304.35h1.8v1.25h-1.8zM59.8 304.35h2.2v1.25h-2.2zM53.1 306.35h1.8v1.25h-1.8zM53.1 308.35h1.8v1.25h-1.8zM53.1 310.35h1.8v1.25h-1.8zM53.1 312.35h1.8v1.25h-1.8zM53.1 314.35h1.8v1.25h-1.8zM59.8 314.35h2.2v1.25h-2.2zM53.1 324.35h1.8v1.25h-1.8zM53.1 326.35h1.8v1.25h-1.8zM53.1 328.35h1.8v1.25h-1.8zM59.8 328.35h2.2v1.25h-2.2zM53.1 330.35h1.8v1.25h-1.8zM59.8 330.35h2.2v1.25h-2.2zM61.1 338.35h2.2v1.25h-2.2zM67.8 338.35h1.8v1.25h-1.8zM61.1 340.35h2.2v1.25h-2.2zM67.8 340.35h1.8v1.25h-1.8zM61.1 342.35h2.2v1.25h-2.2zM67.8 342.35h1.8v1.25h-1.8zM61.1 344.35h2.2v1.25h-2.2zM67.8 344.35h1.8v1.25h-1.8zM61.1 346.35h2.2v1.25h-2.2zM67.8 346.35h1.8v1.25h-1.8zM61.1 354.35h2.2v1.25h-2.2z" fill="#808080"/></g></svg>
<div style="position:absolute;left:1304px;top:0px;width:1px;height:357px;background:#3a3a3a;"></div>
<div style="position:absolute;left:1305px;top:42px;width:13px;height:20px;background:#4a4a4a;"></div>
<div style="position:absolute;left:1305px;top:45px;width:13px;height:2px;background:#9a9a9a;"></div>
</div>
<div style="position:absolute;left:48px;top:468px;width:1318px;height:1px;background:#414141;"></div>
<span style="position:absolute;left:70.50px;top:479.79px;line-height:15px;font-size:11px;color:#8f8f8f;white-space:pre;letter-spacing:-0.672px;">PROBLEMS</span>
<span style="position:absolute;left:151.70px;top:479.79px;line-height:15px;font-size:11px;color:#8f8f8f;white-space:pre;letter-spacing:-0.352px;">OUTPUT</span>
<span style="position:absolute;left:217.50px;top:479.79px;line-height:15px;font-size:11px;color:#e7e7e7;white-space:pre;letter-spacing:0.117px;">TERMINAL</span>
<div style="position:absolute;left:217px;top:502px;width:58px;height:1px;background:#e7e7e7;"></div>
<span class="m" style="position:absolute;left:68px;top:519.5px;width:8px;text-align:center;line-height:19px;font-size:14px;font-weight:700;color:#23d18b">i</span>
<span class="m" style="position:absolute;left:76px;top:519.5px;width:8px;text-align:center;line-height:19px;font-size:14px;font-weight:700;color:#23d18b">t</span>
<span class="m" style="position:absolute;left:84px;top:519.5px;width:8px;text-align:center;line-height:19px;font-size:14px;font-weight:700;color:#23d18b">a</span>
<span class="m" style="position:absolute;left:92px;top:519.5px;width:8px;text-align:center;line-height:19px;font-size:14px;font-weight:700;color:#23d18b">m</span>
<span class="m" style="position:absolute;left:100px;top:519.5px;width:8px;text-align:center;line-height:19px;font-size:14px;font-weight:700;color:#23d18b">a</span>
<span class="m" style="position:absolute;left:108px;top:519.5px;width:8px;text-align:center;line-height:19px;font-size:14px;font-weight:700;color:#23d18b">r</span>
<span class="m" style="position:absolute;left:116px;top:519.5px;width:8px;text-align:center;line-height:19px;font-size:14px;font-weight:700;color:#23d18b">@</span>
<span class="m" style="position:absolute;left:124px;top:519.5px;width:8px;text-align:center;line-height:19px;font-size:14px;font-weight:700;color:#23d18b">i</span>
<span class="m" style="position:absolute;left:132px;top:519.5px;width:8px;text-align:center;line-height:19px;font-size:14px;font-weight:700;color:#23d18b">t</span>
<span class="m" style="position:absolute;left:140px;top:519.5px;width:8px;text-align:center;line-height:19px;font-size:14px;font-weight:700;color:#23d18b">a</span>
<span class="m" style="position:absolute;left:148px;top:519.5px;width:8px;text-align:center;line-height:19px;font-size:14px;font-weight:700;color:#23d18b">m</span>
<span class="m" style="position:absolute;left:156px;top:519.5px;width:8px;text-align:center;line-height:19px;font-size:14px;font-weight:700;color:#23d18b">a</span>
<span class="m" style="position:absolute;left:164px;top:519.5px;width:8px;text-align:center;line-height:19px;font-size:14px;font-weight:700;color:#23d18b">r</span>
<span class="m" style="position:absolute;left:172px;top:519.5px;width:8px;text-align:center;line-height:19px;font-size:14px;font-weight:700;color:#23d18b">-</span>
<span class="m" style="position:absolute;left:180px;top:519.5px;width:8px;text-align:center;line-height:19px;font-size:14px;font-weight:700;color:#23d18b">d</span>
<span class="m" style="position:absolute;left:188px;top:519.5px;width:8px;text-align:center;line-height:19px;font-size:14px;font-weight:700;color:#23d18b">e</span>
<span class="m" style="position:absolute;left:196px;top:519.5px;width:8px;text-align:center;line-height:19px;font-size:14px;font-weight:700;color:#23d18b">s</span>
<span class="m" style="position:absolute;left:204px;top:519.5px;width:8px;text-align:center;line-height:19px;font-size:14px;font-weight:700;color:#23d18b">k</span>
<span class="m" style="position:absolute;left:212px;top:519.5px;width:8px;text-align:center;line-height:19px;font-size:14px;font-weight:700;color:#23d18b">t</span>
<span class="m" style="position:absolute;left:220px;top:519.5px;width:8px;text-align:center;line-height:19px;font-size:14px;font-weight:700;color:#23d18b">o</span>
<span class="m" style="position:absolute;left:228px;top:519.5px;width:8px;text-align:center;line-height:19px;font-size:14px;font-weight:700;color:#23d18b">p</span>
<span class="m" style="position:absolute;left:236px;top:519.5px;width:8px;text-align:center;line-height:19px;font-size:14px;font-weight:400;color:#cccccc">:</span>
<span class="m" style="position:absolute;left:244px;top:519.5px;width:8px;text-align:center;line-height:19px;font-size:14px;font-weight:700;color:#3b8eea">~</span>
<span class="m" style="position:absolute;left:252px;top:519.5px;width:8px;text-align:center;line-height:19px;font-size:14px;font-weight:400;color:#cccccc">$</span>
<div style="position:absolute;left:1032px;top:475px;width:170px;height:24px;background:#3c3c3c;"></div>
<span style="position:absolute;left:1041.50px;top:478.80px;line-height:18px;font-size:13px;color:#f0f0f0;white-space:pre;letter-spacing:0.238px;">1: bash</span>
<svg style="left:1183px;top:482px;" width="12" height="10" viewBox="0 0 12 10"><path d="M1.5 2.5 L6 7 L10.500 2.500" fill="none" stroke="#c5c5c5" stroke-width="1.1"/></svg>
<svg style="left:1210px;top:480px;" width="14" height="14" viewBox="0 0 14 14"><path d="M7 0.500V13.500M0.500 7H13.500" stroke="#c5c5c5" stroke-width="1.200" fill="none"/></svg>
<svg style="left:1233px;top:482px;" width="12" height="10" viewBox="0 0 12 10"><path d="M1.500 2.500 L6 7 L10.500 2.500" fill="none" stroke="#c5c5c5" stroke-width="1.100"/></svg>
<svg style="left:1258px;top:480px;" width="15" height="15" viewBox="0 0 15 15"><g fill="none" stroke="#c5c5c5" stroke-width="1.100"><rect x="1.200" y="1.300" width="12.600" height="12" rx="1"/><path d="M7.500 1.300V13.300"/></g></svg>
<svg style="left:1283px;top:479px;" width="15" height="16" viewBox="0 0 15 16"><g fill="none" stroke="#c5c5c5" stroke-width="1.100"><path d="M1.500 3.500H13.500M5 3.500V1.500H10V3.500M3 3.500V14.500H12V3.500M6 6V12M9 6V12"/></g></svg>
<svg style="left:1311px;top:482px;" width="12" height="10" viewBox="0 0 12 10"><path d="M1.500 7.500 L6 3 L10.500 7.500" fill="none" stroke="#c5c5c5" stroke-width="1.100"/></svg>
<svg style="left:1337.5px;top:481.5px;" width="11" height="11" viewBox="0 0 11 11"><path d="M1 1 L10 10 M10 1 L1 10" fill="none" stroke="#c5c5c5" stroke-width="1.100"/></svg>
<div style="position:absolute;left:161px;top:270px;width:432px;height:232px;box-sizing:border-box;border:1px solid #454545;background:#252526;"></div>
<div style="position:absolute;left:162px;top:271px;width:430px;height:19px;background:#062f4a;"></div>
<svg style="left:164.15px;top:272.85px;" width="16.3" height="16.3" viewBox="0 0 16 16"><path d="M13.51 4l-5-3h-1l-5 3-.49.86v6l.49.85 5 3h1l5-3 .49-.85v-6L13.51 4zm-6 9.56l-4.5-2.7V5.7l4.5 2.45v5.41zM3.27 4.7l4.74-2.84 4.74 2.84-4.74 2.590L3.270 4.700zm9.740 6.160l-4.500 2.700V8.150l4.500-2.450v5.160z" fill="#b180d7"/></svg>
<div class="m" style="position:absolute;left:184.00px;top:272.50px;height:19px;line-height:19px;font-size:15px;letter-spacing:-0.600px;white-space:pre;color:#d4d4d4"><span style="color:#0097fb;font-weight:700">hb </span>DispOutAtBox</div>
<div style="position:absolute;left:201px;top:287.7px;width:8.2px;height:1.9px;background:#0097fb;"></div>
<svg style="left:164.15px;top:291.85px;" width="16.3" height="16.3" viewBox="0 0 16 16"><path d="M13.51 4l-5-3h-1l-5 3-.49.86v6l.49.85 5 3h1l5-3 .49-.85v-6L13.51 4zm-6 9.56l-4.5-2.7V5.7l4.5 2.45v5.41zM3.27 4.7l4.74-2.84 4.74 2.84-4.74 2.590L3.270 4.700zm9.740 6.160l-4.500 2.700V8.150l4.500-2.450v5.160z" fill="#b180d7"/></svg>
<div class="m" style="position:absolute;left:184.00px;top:291.50px;height:19px;line-height:19px;font-size:15px;letter-spacing:-0.600px;white-space:pre;color:#d4d4d4"><span style="color:#0097fb;font-weight:700">hb </span>DynCall</div>
<div style="position:absolute;left:201px;top:306.7px;width:8.2px;height:1.9px;background:#0097fb;"></div>
<svg style="left:164.15px;top:310.85px;" width="16.3" height="16.3" viewBox="0 0 16 16"><path d="M13.51 4l-5-3h-1l-5 3-.49.86v6l.49.85 5 3h1l5-3 .49-.85v-6L13.51 4zm-6 9.56l-4.5-2.7V5.7l4.5 2.45v5.41zM3.27 4.7l4.74-2.84 4.74 2.84-4.74 2.590L3.270 4.700zm9.740 6.160l-4.500 2.700V8.150l4.500-2.450v5.160z" fill="#b180d7"/></svg>
<div class="m" style="position:absolute;left:184.00px;top:310.50px;height:19px;line-height:19px;font-size:15px;letter-spacing:-0.600px;white-space:pre;color:#d4d4d4"><span style="color:#0097fb;font-weight:700">hb </span>EndObject</div>
<div style="position:absolute;left:201px;top:325.7px;width:8.2px;height:1.9px;background:#0097fb;"></div>
<svg style="left:164.15px;top:329.85px;" width="16.3" height="16.3" viewBox="0 0 16 16"><path d="M13.51 4l-5-3h-1l-5 3-.49.86v6l.49.85 5 3h1l5-3 .49-.85v-6L13.51 4zm-6 9.56l-4.5-2.7V5.7l4.5 2.45v5.41zM3.27 4.7l4.74-2.84 4.74 2.84-4.74 2.590L3.270 4.700zm9.740 6.160l-4.500 2.700V8.150l4.500-2.450v5.160z" fill="#b180d7"/></svg>
<div class="m" style="position:absolute;left:184.00px;top:329.50px;height:19px;line-height:19px;font-size:15px;letter-spacing:-0.600px;white-space:pre;color:#d4d4d4"><span style="color:#0097fb;font-weight:700">hb </span>ExecFromArray</div>
<div style="position:absolute;left:201px;top:344.7px;width:8.2px;height:1.9px;background:#0097fb;"></div>
<svg style="left:164.15px;top:348.85px;" width="16.3" height="16.3" viewBox="0 0 16 16"><path d="M13.51 4l-5-3h-1l-5 3-.49.86v6l.49.85 5 3h1l5-3 .49-.85v-6L13.51 4zm-6 9.56l-4.5-2.7V5.7l4.5 2.45v5.41zM3.27 4.7l4.74-2.84 4.74 2.84-4.74 2.590L3.270 4.700zm9.740 6.160l-4.500 2.700V8.150l4.500-2.450v5.160z" fill="#b180d7"/></svg>
<div class="m" style="position:absolute;left:184.00px;top:348.50px;height:19px;line-height:19px;font-size:15px;letter-spacing:-0.600px;white-space:pre;color:#d4d4d4"><span style="color:#0097fb;font-weight:700">hb </span>ExecMsg</div>
<div style="position:absolute;left:201px;top:363.7px;width:8.2px;height:1.9px;background:#0097fb;"></div>
<svg style="left:164.15px;top:367.85px;" width="16.3" height="16.3" viewBox="0 0 16 16"><path d="M13.51 4l-5-3h-1l-5 3-.49.86v6l.49.85 5 3h1l5-3 .49-.85v-6L13.51 4zm-6 9.56l-4.5-2.7V5.7l4.5 2.45v5.41zM3.27 4.7l4.74-2.84 4.74 2.84-4.74 2.590L3.270 4.700zm9.740 6.160l-4.500 2.700V8.150l4.500-2.450v5.160z" fill="#b180d7"/></svg>
<div class="m" style="position:absolute;left:184.00px;top:367.50px;height:19px;line-height:19px;font-size:15px;letter-spacing:-0.600px;white-space:pre;color:#d4d4d4"><span style="color:#0097fb;font-weight:700">hb </span>FCommit</div>
<div style="position:absolute;left:201px;top:382.7px;width:8.2px;height:1.9px;background:#0097fb;"></div>
<svg style="left:164.15px;top:386.85px;" width="16.3" height="16.3" viewBox="0 0 16 16"><path d="M13.51 4l-5-3h-1l-5 3-.49.86v6l.49.85 5 3h1l5-3 .49-.85v-6L13.51 4zm-6 9.56l-4.5-2.7V5.7l4.5 2.45v5.41zM3.27 4.7l4.74-2.84 4.74 2.84-4.74 2.590L3.270 4.700zm9.740 6.160l-4.500 2.700V8.150l4.500-2.450v5.160z" fill="#b180d7"/></svg>
<div class="m" style="position:absolute;left:184.00px;top:386.50px;height:19px;line-height:19px;font-size:15px;letter-spacing:-0.600px;white-space:pre;color:#d4d4d4"><span style="color:#0097fb;font-weight:700">hb </span>FCopy</div>
<div style="position:absolute;left:201px;top:401.7px;width:8.2px;height:1.9px;background:#0097fb;"></div>
<svg style="left:164.15px;top:405.85px;" width="16.3" height="16.3" viewBox="0 0 16 16"><path d="M13.51 4l-5-3h-1l-5 3-.49.86v6l.49.85 5 3h1l5-3 .49-.85v-6L13.51 4zm-6 9.56l-4.5-2.7V5.7l4.5 2.45v5.41zM3.27 4.7l4.74-2.84 4.74 2.84-4.74 2.590L3.270 4.700zm9.740 6.160l-4.500 2.700V8.150l4.500-2.450v5.160z" fill="#b180d7"/></svg>
<div class="m" style="position:absolute;left:184.00px;top:405.50px;height:19px;line-height:19px;font-size:15px;letter-spacing:-0.600px;white-space:pre;color:#d4d4d4"><span style="color:#0097fb;font-weight:700">hb </span>FCreate</div>
<div style="position:absolute;left:201px;top:420.7px;width:8.2px;height:1.9px;background:#0097fb;"></div>
<svg style="left:164.15px;top:424.85px;" width="16.3" height="16.3" viewBox="0 0 16 16"><path d="M13.51 4l-5-3h-1l-5 3-.49.86v6l.49.85 5 3h1l5-3 .49-.85v-6L13.51 4zm-6 9.56l-4.5-2.7V5.7l4.5 2.45v5.41zM3.27 4.7l4.74-2.84 4.74 2.84-4.74 2.590L3.270 4.700zm9.740 6.160l-4.500 2.700V8.150l4.500-2.450v5.160z" fill="#b180d7"/></svg>
<div class="m" style="position:absolute;left:184.00px;top:424.50px;height:19px;line-height:19px;font-size:15px;letter-spacing:-0.600px;white-space:pre;color:#d4d4d4"><span style="color:#0097fb;font-weight:700">hb </span>FGetAttr</div>
<div style="position:absolute;left:201px;top:439.7px;width:8.2px;height:1.9px;background:#0097fb;"></div>
<svg style="left:164.15px;top:443.85px;" width="16.3" height="16.3" viewBox="0 0 16 16"><path d="M13.51 4l-5-3h-1l-5 3-.49.86v6l.49.85 5 3h1l5-3 .49-.85v-6L13.51 4zm-6 9.56l-4.5-2.7V5.7l4.5 2.45v5.41zM3.27 4.7l4.74-2.84 4.74 2.84-4.74 2.590L3.270 4.700zm9.740 6.160l-4.500 2.700V8.150l4.500-2.450v5.160z" fill="#b180d7"/></svg>
<div class="m" style="position:absolute;left:184.00px;top:443.50px;height:19px;line-height:19px;font-size:15px;letter-spacing:-0.600px;white-space:pre;color:#d4d4d4"><span style="color:#0097fb;font-weight:700">hb </span>FGetDateTime</div>
<div style="position:absolute;left:201px;top:458.7px;width:8.2px;height:1.9px;background:#0097fb;"></div>
<svg style="left:164.15px;top:462.85px;" width="16.3" height="16.3" viewBox="0 0 16 16"><path d="M13.51 4l-5-3h-1l-5 3-.49.86v6l.49.85 5 3h1l5-3 .49-.85v-6L13.51 4zm-6 9.56l-4.5-2.7V5.7l4.5 2.45v5.41zM3.27 4.7l4.74-2.84 4.74 2.84-4.74 2.590L3.270 4.700zm9.740 6.160l-4.500 2.700V8.150l4.500-2.450v5.160z" fill="#b180d7"/></svg>
<div class="m" style="position:absolute;left:184.00px;top:462.50px;height:19px;line-height:19px;font-size:15px;letter-spacing:-0.600px;white-space:pre;color:#d4d4d4"><span style="color:#0097fb;font-weight:700">hb </span>FIsDevice</div>
<div style="position:absolute;left:201px;top:477.7px;width:8.2px;height:1.9px;background:#0097fb;"></div>
<svg style="left:164.15px;top:481.85px;" width="16.3" height="16.3" viewBox="0 0 16 16"><path d="M13.51 4l-5-3h-1l-5 3-.49.86v6l.49.85 5 3h1l5-3 .49-.85v-6L13.51 4zm-6 9.56l-4.5-2.7V5.7l4.5 2.45v5.41zM3.27 4.7l4.74-2.84 4.74 2.84-4.74 2.590L3.270 4.700zm9.740 6.160l-4.500 2.700V8.150l4.500-2.450v5.160z" fill="#b180d7"/></svg>
<div class="m" style="position:absolute;left:184.00px;top:481.50px;height:19px;line-height:19px;font-size:15px;letter-spacing:-0.600px;white-space:pre;color:#d4d4d4"><span style="color:#0097fb;font-weight:700">hb </span>FLink</div>
<div style="position:absolute;left:201px;top:496.7px;width:8.2px;height:1.9px;background:#0097fb;"></div>
<svg style="left:15.75px;top:714.7px;" width="12.4" height="12.4" viewBox="0 0 14 14"><g fill="none" stroke="#ffffff" stroke-width="1.1"><circle cx="7" cy="7" r="6.2"/><path d="M4.500 4.500 L9.500 9.500 M9.500 4.500 L4.500 9.500"/></g></svg>
<span style="position:absolute;left:32.30px;top:711.93px;line-height:18px;font-size:12.6px;color:#ffffff;white-space:pre;">0</span>
<svg style="left:42.3px;top:714.3px;" width="13" height="13" viewBox="0 0 14 14"><g fill="none" stroke="#ffffff" stroke-width="1.100" stroke-linejoin="round"><path d="M7 1.300 L13.200 12.700 H0.800 Z"/><path d="M7 5.200 V9"/><path d="M7 10.200 V11.400"/></g></svg>
<span style="position:absolute;left:59.50px;top:711.93px;line-height:18px;font-size:12.6px;color:#ffffff;white-space:pre;">0</span>
<span style="position:absolute;left:995.50px;top:712.36px;line-height:18px;font-size:12.8px;color:#ffffff;white-space:pre;letter-spacing:-0.379px;">Ln 161, Col 5</span>
<span style="position:absolute;left:1083.50px;top:712.36px;line-height:18px;font-size:12.8px;color:#ffffff;white-space:pre;letter-spacing:-0.614px;">Spaces: 3</span>
<span style="position:absolute;left:1152.00px;top:712.36px;line-height:18px;font-size:12.8px;color:#ffffff;white-space:pre;letter-spacing:-1.037px;">UTF-8</span>
<span style="position:absolute;left:1199.80px;top:712.36px;line-height:18px;font-size:12.8px;color:#ffffff;white-space:pre;letter-spacing:-1.200px;">CRLF</span>
<span style="position:absolute;left:1244.00px;top:712.36px;line-height:18px;font-size:12.8px;color:#ffffff;white-space:pre;letter-spacing:0.087px;">Harbour</span>
<svg style="left:1307.5px;top:714.3px;" width="13.4" height="13.4" viewBox="0 0 14 14"><g fill="none" stroke="#ffffff" stroke-width="1.100"><path d="M6.500 1.500 H13 V7.500 H11 L9.500 9 V7.500"/><circle cx="4.500" cy="5.500" r="2.200"/><path d="M0.800 13 C0.800 9.500 3 8.800 4.500 8.800 C6 8.800 8.200 9.500 8.200 13"/></g></svg>
<svg style="left:1338.6px;top:714px;" width="12.8" height="13.7" viewBox="0 0 14 15"><g fill="none" stroke="#ffffff" stroke-width="1.100"><path d="M2 11.500 H12 L10.800 9.500 V6 C10.800 3.500 9.200 1.800 7 1.800 C4.800 1.800 3.200 3.500 3.200 6 V9.500 Z"/><path d="M5.800 13.200 A1.300 1.300 0 0 0 8.200 13.200"/></g></svg>
<div style="position:absolute;left:189.2px;top:732px;width:108.0px;height:36px;background:#46494d;"></div>
<div style="position:absolute;left:189.2px;top:732px;width:108.0px;height:3px;background:#727577;"></div>
<div style="position:absolute;left:299px;top:732px;width:108px;height:36px;background:#46494d;"></div>
<div style="position:absolute;left:299px;top:732px;width:108px;height:3px;background:#727577;"></div>
<div style="position:absolute;left:409px;top:732px;width:108.70000000000005px;height:36px;background:#3f4246;"></div>
<div style="position:absolute;left:519.2px;top:732px;width:107.89999999999998px;height:36px;background:#46494d;"></div>
<div style="position:absolute;left:519.2px;top:732px;width:107.89999999999998px;height:3px;background:#727577;"></div>
<div style="position:absolute;left:629px;top:732px;width:108.29999999999995px;height:36px;background:#46494d;"></div>
<div style="position:absolute;left:629px;top:732px;width:108.29999999999995px;height:3px;background:#727577;"></div>
<div style="position:absolute;left:739.2px;top:732px;width:107.89999999999998px;height:36px;background:#46494d;"></div>
<div style="position:absolute;left:739.2px;top:732px;width:107.89999999999998px;height:3px;background:#727577;"></div>
<div style="position:absolute;left:849px;top:732px;width:107.89999999999998px;height:36px;background:#2e5972;"></div>
<div style="position:absolute;left:849px;top:732px;width:107.89999999999998px;height:3px;background:#3a8dbc;"></div>
<svg style="left:8px;top:738px;" width="22" height="22" viewBox="0 0 22 22"><g fill="#fcfcfc"><circle cx="3.4" cy="11.5" r="1.600"/><circle cx="5.900" cy="4.600" r="1.200"/><circle cx="8.100" cy="17.800" r="2.200"/><path d="M11.300 3.700 L13.600 3.700 L18.600 8.600 L13.600 13.500 L11.300 13.500 L11.300 11.900 L14.700 8.600 L11.300 5.300 Z"/></g></svg>
<svg style="left:45px;top:740px;" width="19.5" height="19.5" viewBox="0 0 20 20"><defs><linearGradient id="sg" x1="0" y1="0" x2="0" y2="1"><stop offset="0" stop-color="#33383d"/><stop offset="1" stop-color="#24272b"/></linearGradient></defs><rect width="20" height="20" rx="1.500" fill="url(#sg)"/><rect x="2.500" y="6.500" width="15" height="1.200" fill="#3daee9"/><circle cx="14.600" cy="7.100" r="1.700" fill="#fcfcfc"/><rect x="2.500" y="12.300" width="15" height="1.200" fill="#3daee9"/><circle cx="7.500" cy="12.900" r="1.700" fill="#fcfcfc"/><rect x="9" y="12.300" width="8.500" height="1.200" fill="#4a4f54"/></svg>
<svg style="left:84px;top:740px;" width="18" height="20" viewBox="0 0 18 20"><defs><linearGradient id="bg" x1="0" y1="0" x2="0" y2="1"><stop offset="0" stop-color="#37a6f5"/><stop offset="1" stop-color="#1a86e0"/></linearGradient></defs><path d="M5.800 6 C5.800 0.500 12.200 0.500 12.200 6" fill="none" stroke="#2ea0f3" stroke-width="1.200"/><rect x="1" y="5.600" width="16.300" height="13.700" rx="0.800" fill="url(#bg)"/><path d="M8.800 9.300 L11.300 11.500 L8.800 13.700" stroke="#d6ecfd" stroke-width="1.300" fill="none"/><circle cx="6.500" cy="10" r="0.600" fill="#9fd2fa"/><circle cx="7.300" cy="13.200" r="0.600" fill="#9fd2fa"/><circle cx="8.600" cy="15.600" r="0.700" fill="#9fd2fa"/></svg>
<svg style="left:120.7px;top:739.7px;" width="20.6" height="20.6" viewBox="-10.3 -10.3 20.6 20.6"><circle cx="0" cy="0" r="10.3" fill="#db4437"/><path d="M0 0 L-8.96 -5.15 A10.3 10.3 0 0 0 2.68 9.99 Z" fill="#0f9d58"/><path d="M0 0 L2.68 9.99 A10.3 10.3 0 0 0 9.48 -4.12 Z" fill="#ffcd40"/><path d="M0 0 L-8.96 -5.15 A10.3 10.3 0 0 1 9.48 -4.12 Z" fill="#db4437"/><circle cx="0" cy="0" r="4.74" fill="#f1f1f1"/><circle cx="0" cy="0" r="3.71" fill="#4285f4"/></svg>
<svg style="left:159.2px;top:740px;" width="19.8" height="19.8" viewBox="0 0 22 22"><rect width="22" height="22" rx="1.200" fill="#f8412f"/><path d="M8.600 5.300 L14.300 11 L8.600 16.700 L2.900 11 Z" fill="#fff"/><path d="M14.200 5.300 L19.900 11 L14.200 16.700 L12.900 15.400 L17.300 11 L12.900 6.600 Z" fill="#fff"/></svg>
<svg style="left:197.0px;top:739.7px;" width="19.8" height="19.8" viewBox="-9.9 -9.9 19.8 19.8"><circle cx="0" cy="0" r="9.9" fill="#5e8ff0"/><path d="M0 0 L-8.61 -4.95 A9.9 9.9 0 0 1 9.60 -2.57 Z" fill="#3f73e4"/><path d="M0 0 L9.60 -2.57 A9.9 9.9 0 0 1 -2.57 9.60 Z" fill="#a9c3f8"/><circle cx="0" cy="0" r="4.65" fill="#e8f0fe"/><circle cx="0" cy="0" r="3.86" fill="#4285f4"/></svg>
<svg style="left:201.5px;top:757.8px;" width="10" height="10" viewBox="0 0 10 10"><circle cx="5" cy="5" r="4.700" fill="#1fb158"/><path d="M5 2.300V7.700M2.300 5H7.700" stroke="#fff" stroke-width="1.200"/></svg>
<span style="position:absolute;left:226.20px;top:740.86px;line-height:19px;font-size:13.4px;color:#fcfcfc;white-space:pre;letter-spacing:-0.219px;">Nave...</span>
<svg style="left:273.75px;top:741.25px;" width="17.5" height="17.5" viewBox="0 0 18 18"><path d="M0.800 6.300 H3.300 L8.800 0.800 H10 V17.200 H8.800 L3.300 11.700 H0.800 Z" fill="#fcfcfc"/><path d="M12 5.500 A5 5 0 0 1 12 12.500" fill="none" stroke="#fcfcfc" stroke-width="1.400"/><path d="M13.800 2.300 A8.600 8.600 0 0 1 13.800 15.700" fill="none" stroke="#c9cbcc" stroke-width="1.300"/></svg>
<svg style="left:308.2px;top:741px;" width="18" height="17.5" viewBox="0 0 18 18"><defs><linearGradient id="kg" x1="0" y1="0" x2="1" y2="1"><stop offset="0" stop-color="#2a3436"/><stop offset="1" stop-color="#3c4849"/></linearGradient></defs><rect width="18" height="18" rx="1" fill="url(#kg)"/><rect width="18" height="1" fill="#505c5d"/><path d="M6.500 5.500 L10.500 9 L6.500 12.500" stroke="#aeb8b9" stroke-width="1.100" fill="none"/></svg>
<span style="position:absolute;left:336.00px;top:740.86px;line-height:19px;font-size:13.4px;color:#fcfcfc;white-space:pre;letter-spacing:0.044px;">exemplo...</span>
<svg style="left:419px;top:744.1px;" width="16" height="11.6" viewBox="0 0 16 11.600"><defs><linearGradient id="eg" x1="0" y1="0" x2="0" y2="1"><stop offset="0" stop-color="#63d6ad"/><stop offset="1" stop-color="#2cb0cc"/></linearGradient></defs><rect width="16" height="11.600" rx="1" fill="#17191b"/><rect x="0.800" y="0.800" width="14.400" height="8.600" rx="0.500" fill="url(#eg)"/><rect x="3.100" y="4.100" width="9.700" height="3.500" rx="1.700" fill="#17191b"/><circle cx="5.300" cy="5.850" r="0.800" fill="#2f8f8c"/><circle cx="10.600" cy="5.850" r="0.800" fill="#2f8f8c"/></svg>
<span style="position:absolute;left:445.80px;top:740.86px;line-height:19px;font-size:13.4px;color:#fcfcfc;white-space:pre;letter-spacing:-0.340px;">Elisa</span>
<svg style="left:494.15px;top:741.25px;" width="17.5" height="17.5" viewBox="0 0 18 18"><path d="M0.800 6.300 H3.300 L8.800 0.800 H10 V17.200 H8.800 L3.300 11.700 H0.800 Z" fill="#fcfcfc"/><path d="M12 5.500 A5 5 0 0 1 12 12.500" fill="none" stroke="#b0b2b4" stroke-width="1.300"/><path d="M13.800 2.500 A8.500 8.500 0 0 1 13.800 15.500" fill="none" stroke="#85888b" stroke-width="1.300"/><path d="M1 1 L17 17" stroke="#da4453" stroke-width="1.300"/></svg>
<svg style="left:526.7px;top:740.8px;" width="20.5" height="18" viewBox="0 0 20.500 18"><defs><linearGradient id="fg" x1="0" y1="0" x2="0" y2="1"><stop offset="0" stop-color="#4aa9f3"/><stop offset="1" stop-color="#1b7ad8"/></linearGradient></defs><path d="M0 0.800 Q0 0 0.800 0 H8.500 L10.300 2 H20.500 V17 H0 Z" fill="#145f9e"/><rect x="1.500" y="4" width="17.800" height="4" fill="#f4f8fb"/><rect x="0" y="6.900" width="20.500" height="11.100" rx="0.600" fill="url(#fg)"/><rect x="0" y="6.900" width="20.500" height="0.800" fill="#8ccbf8"/></svg>
<span style="position:absolute;left:556.10px;top:740.86px;line-height:19px;font-size:13.4px;color:#fcfcfc;white-space:pre;letter-spacing:0.005px;">fontes —...</span>
<svg style="left:637.6px;top:740.8px;" width="18.5" height="18.5" viewBox="0 0 20 20"><defs><linearGradient id="qg" x1="0" y1="0" x2="1" y2="1"><stop offset="0" stop-color="#55c455"/><stop offset="1" stop-color="#1c9428"/></linearGradient></defs><rect width="20" height="20" rx="0.800" fill="url(#qg)"/><path d="M5.500 3.500 H14.500 C14.500 8.500 12.500 10.500 10.600 10.800 V15 H13.500 V16.500 H6.500 V15 H9.400 V10.800 C7.500 10.500 5.500 8.500 5.500 3.500 Z" fill="#ececec"/><path d="M6.600 5.500 H13.400 C13 8.500 11.500 9.700 10 9.700 C8.500 9.700 7 8.500 6.600 5.500 Z" fill="#c4232f"/></svg>
<span style="position:absolute;left:666.70px;top:740.86px;line-height:19px;font-size:13.4px;color:#fcfcfc;white-space:pre;letter-spacing:-0.246px;">Q4Wine :...</span>
<svg style="left:746px;top:738px;" width="24" height="24" viewBox="0 0 24 24"><g><path d="M12.300 2 V17.700 M14.500 3.500 V17.700 M17 6 V17.700" stroke="#6f7378" stroke-width="0.700" opacity="0.800"/><path d="M13 9 L19.500 15.500 L13 16.500 Z" fill="#5d6166" opacity="0.500"/><path d="M10 4 L2.500 14.600 L5.500 14 L3.800 17.300 H10 Z" fill="#2b6db8"/><path d="M10 8 L5.500 14 L3.800 17.300 H7 Z" fill="#1b2a4e"/><path d="M0.500 19.200 H22" stroke="#a2506c" stroke-width="0.900" opacity="0.900"/><path d="M4 20.300 H9" stroke="#2b4a9a" stroke-width="0.800"/></g></svg>
<span style="position:absolute;left:776.50px;top:740.86px;line-height:19px;font-size:13.4px;color:#fcfcfc;white-space:pre;letter-spacing:0.070px;">Harbour ...</span>
<svg style="left:856.9px;top:740.0px;opacity:0.87" width="20" height="20" viewBox="0 0 24 24"><path d="M23.15 2.587L18.21.21a1.494 1.494 0 0 0-1.705.29l-9.46 8.63-4.12-3.128a.999.999 0 0 0-1.276.057L.327 7.261A1 1 0 0 0 .326 8.74L3.899 12 .326 15.26a1 1 0 0 0 .001 1.479L1.65 17.94a.999.999 0 0 0 1.276.057l4.12-3.128 9.46 8.63a1.492 1.492 0 0 0 1.704.29l4.942-2.377A1.5 1.5 0 0 0 24 20.06V3.939a1.5 1.5 0 0 0-.85-1.352zm-5.146 14.861L10.826 12l7.178-5.448v10.896z" fill="#1391e2"/><path d="M16.5 .5 L18.2 .2 L23.15 2.6 A1.5 1.5 0 0 1 24 3.94 V20.06 A1.5 1.5 0 0 1 23.15 21.4 L18.2 23.8 L16.5 23.5 L18 22 V2 Z" fill="#29a9f6"/><path d="M.33 7.26 L1.65 6.06 a1 1 0 0 1 1.28-.06 L7.05 9.13 L3.9 12 L.33 8.74 a1 1 0 0 1 0-1.48z M.33 15.26 L3.9 12 l3.15 2.87 L2.93 18 a1 1 0 0 1 -1.28-.06 L.33 16.74 a1 1 0 0 1 0-1.48z" fill="#0e84d2"/></svg>
<div style="position:absolute;left:886.800px;top:745.100px;width:11.600px;height:11.600px;border-radius:50%;background:#fcfcfc"></div>
<span style="position:absolute;left:902.80px;top:741.86px;line-height:19px;font-size:13.4px;color:#fcfcfc;white-space:pre;letter-spacing:-0.205px;">sciwin....</span>
<svg style="left:986px;top:742px;" width="16" height="16" viewBox="0 0 16 16"><defs><linearGradient id="cg" x1="0" y1="0" x2="0" y2="1"><stop offset="0" stop-color="#d9dcdd"/><stop offset="1" stop-color="#8b8f91"/></linearGradient></defs><path d="M3.600 11.700 A3.300 3.300 0 0 1 3.500 5.200 A4.600 4.600 0 0 1 12.300 4.600 A3.600 3.600 0 0 1 12.600 11.700 Z" fill="url(#cg)"/><g fill="#3daee9"><circle cx="2.500" cy="14" r="0.700"/><circle cx="5.500" cy="15" r="0.700"/><circle cx="8.500" cy="14" r="0.700"/><circle cx="11.500" cy="15" r="0.700"/><circle cx="13.500" cy="13.600" r="0.600"/></g></svg>
<svg style="left:1010px;top:739px;" width="21.8" height="21.8" viewBox="0 0 22 22"><rect width="22" height="22" rx="1.200" fill="#f8412f"/><path d="M8.600 5.300 L14.300 11 L8.600 16.700 L2.900 11 Z" fill="#fff"/><path d="M14.200 5.300 L19.900 11 L14.200 16.700 L12.900 15.400 L17.300 11 L12.900 6.600 Z" fill="#fff"/></svg>
<svg style="left:1041.8px;top:740.5px;" width="18.6" height="18.6" viewBox="0 0 22 22"><defs><radialGradient id="gg" cx="0.650" cy="0.300" r="0.800"><stop offset="0" stop-color="#6cc5fa"/><stop offset="1" stop-color="#1583e0"/></radialGradient></defs><circle cx="11" cy="11" r="11" fill="url(#gg)"/><path d="M5 9 C8 8.500 10 7 13 4.500 L18 3.500 L14.500 6.500 L10.500 10.500 L15.500 10 L17.500 11 L12 13 L9 17.500 L8.500 19 L7.500 16 L10 11.500 Z" fill="#dfe6ea"/></svg>
<svg style="left:1071.2px;top:739.8px;" width="20" height="20" viewBox="0 0 20 20"><circle cx="10" cy="10" r="8" fill="none" stroke="#fcfcfc" stroke-width="1.200"/><path d="M8 6.500 L13.600 10 L8 13.500 Z" fill="#fcfcfc"/></svg>
<svg style="left:1104px;top:741.5px;" width="14" height="16.5" viewBox="0 0 14 16.500"><path d="M0.700 2.600 H13.300 V15.800 H0.700 Z" fill="none" stroke="#fcfcfc" stroke-width="1.300"/><rect x="2.600" y="0.300" width="8.800" height="4" fill="#fcfcfc"/><path d="M3.200 7.300 H10.800 M3.200 10 H8.500 M3.200 12.700 H6" stroke="#fcfcfc" stroke-width="1.200"/></svg>
<svg style="left:1135.7px;top:741.8px;" width="10.8" height="16" viewBox="0 0 10.800 16"><rect x="2" y="0.600" width="6.800" height="6.400" fill="none" stroke="#fcfcfc" stroke-width="1.200"/><rect x="3.800" y="2.400" width="1.100" height="2.200" fill="#fcfcfc"/><rect x="6" y="2.400" width="1.100" height="2.200" fill="#fcfcfc"/><rect x="0.600" y="7" width="9.600" height="8.400" fill="none" stroke="#fcfcfc" stroke-width="1.200"/><rect x="2.600" y="11" width="5.600" height="1.300" fill="#fcfcfc"/></svg>
<svg style="left:1158.7px;top:741px;" width="24" height="18" viewBox="0 0 24 18"><g fill="none" stroke-linecap="round"><path d="M2 6 A14.500 14.500 0 0 1 22 6" stroke="#5d6165" stroke-width="1.200"/><path d="M5.300 9.300 A10 10 0 0 1 18.700 9.300" stroke="#7d8184" stroke-width="1.200"/><path d="M8.600 12.300 A5.200 5.200 0 0 1 15.400 12.300" stroke="#fcfcfc" stroke-width="1.300"/></g><circle cx="12" cy="14.900" r="1.300" fill="none" stroke="#fcfcfc" stroke-width="1.100"/></svg>
<svg style="left:1192.25px;top:741.25px;" width="17.5" height="17.5" viewBox="0 0 18 18"><path d="M0.800 6.300 H3.300 L8.800 0.800 H10 V17.200 H8.800 L3.300 11.700 H0.800 Z" fill="#fcfcfc"/><path d="M12 5.500 A5 5 0 0 1 12 12.500" fill="none" stroke="#fcfcfc" stroke-width="1.400"/><path d="M13.800 2.300 A8.600 8.600 0 0 1 13.800 15.700" fill="none" stroke="#c9cbcc" stroke-width="1.300"/></svg>
<svg style="left:1223px;top:747.6px;" width="12" height="5.4" viewBox="0 0 12 5.400"><path d="M0 5.400 L6 0 L12 5.400 Z" fill="#fcfcfc"/></svg>
<span style="position:absolute;left:1264.30px;top:732.04px;line-height:24px;font-size:17.2px;color:#fcfcfc;white-space:pre;letter-spacing:-0.892px;">14:15</span>
<span style="position:absolute;left:1248.70px;top:750.94px;line-height:17px;font-size:12.3px;color:#fcfcfc;white-space:pre;letter-spacing:0.521px;">26/05/2021</span>
<svg style="left:1336px;top:742px;" width="17" height="17" viewBox="0 0 17 17"><rect x="0.700" y="0.700" width="14.800" height="15.100" fill="none" stroke="#fcfcfc" stroke-width="1.300"/><path d="M2.600 13.300 H13.600" stroke="#fcfcfc" stroke-width="1.200"/></svg>
</div></body></html>
